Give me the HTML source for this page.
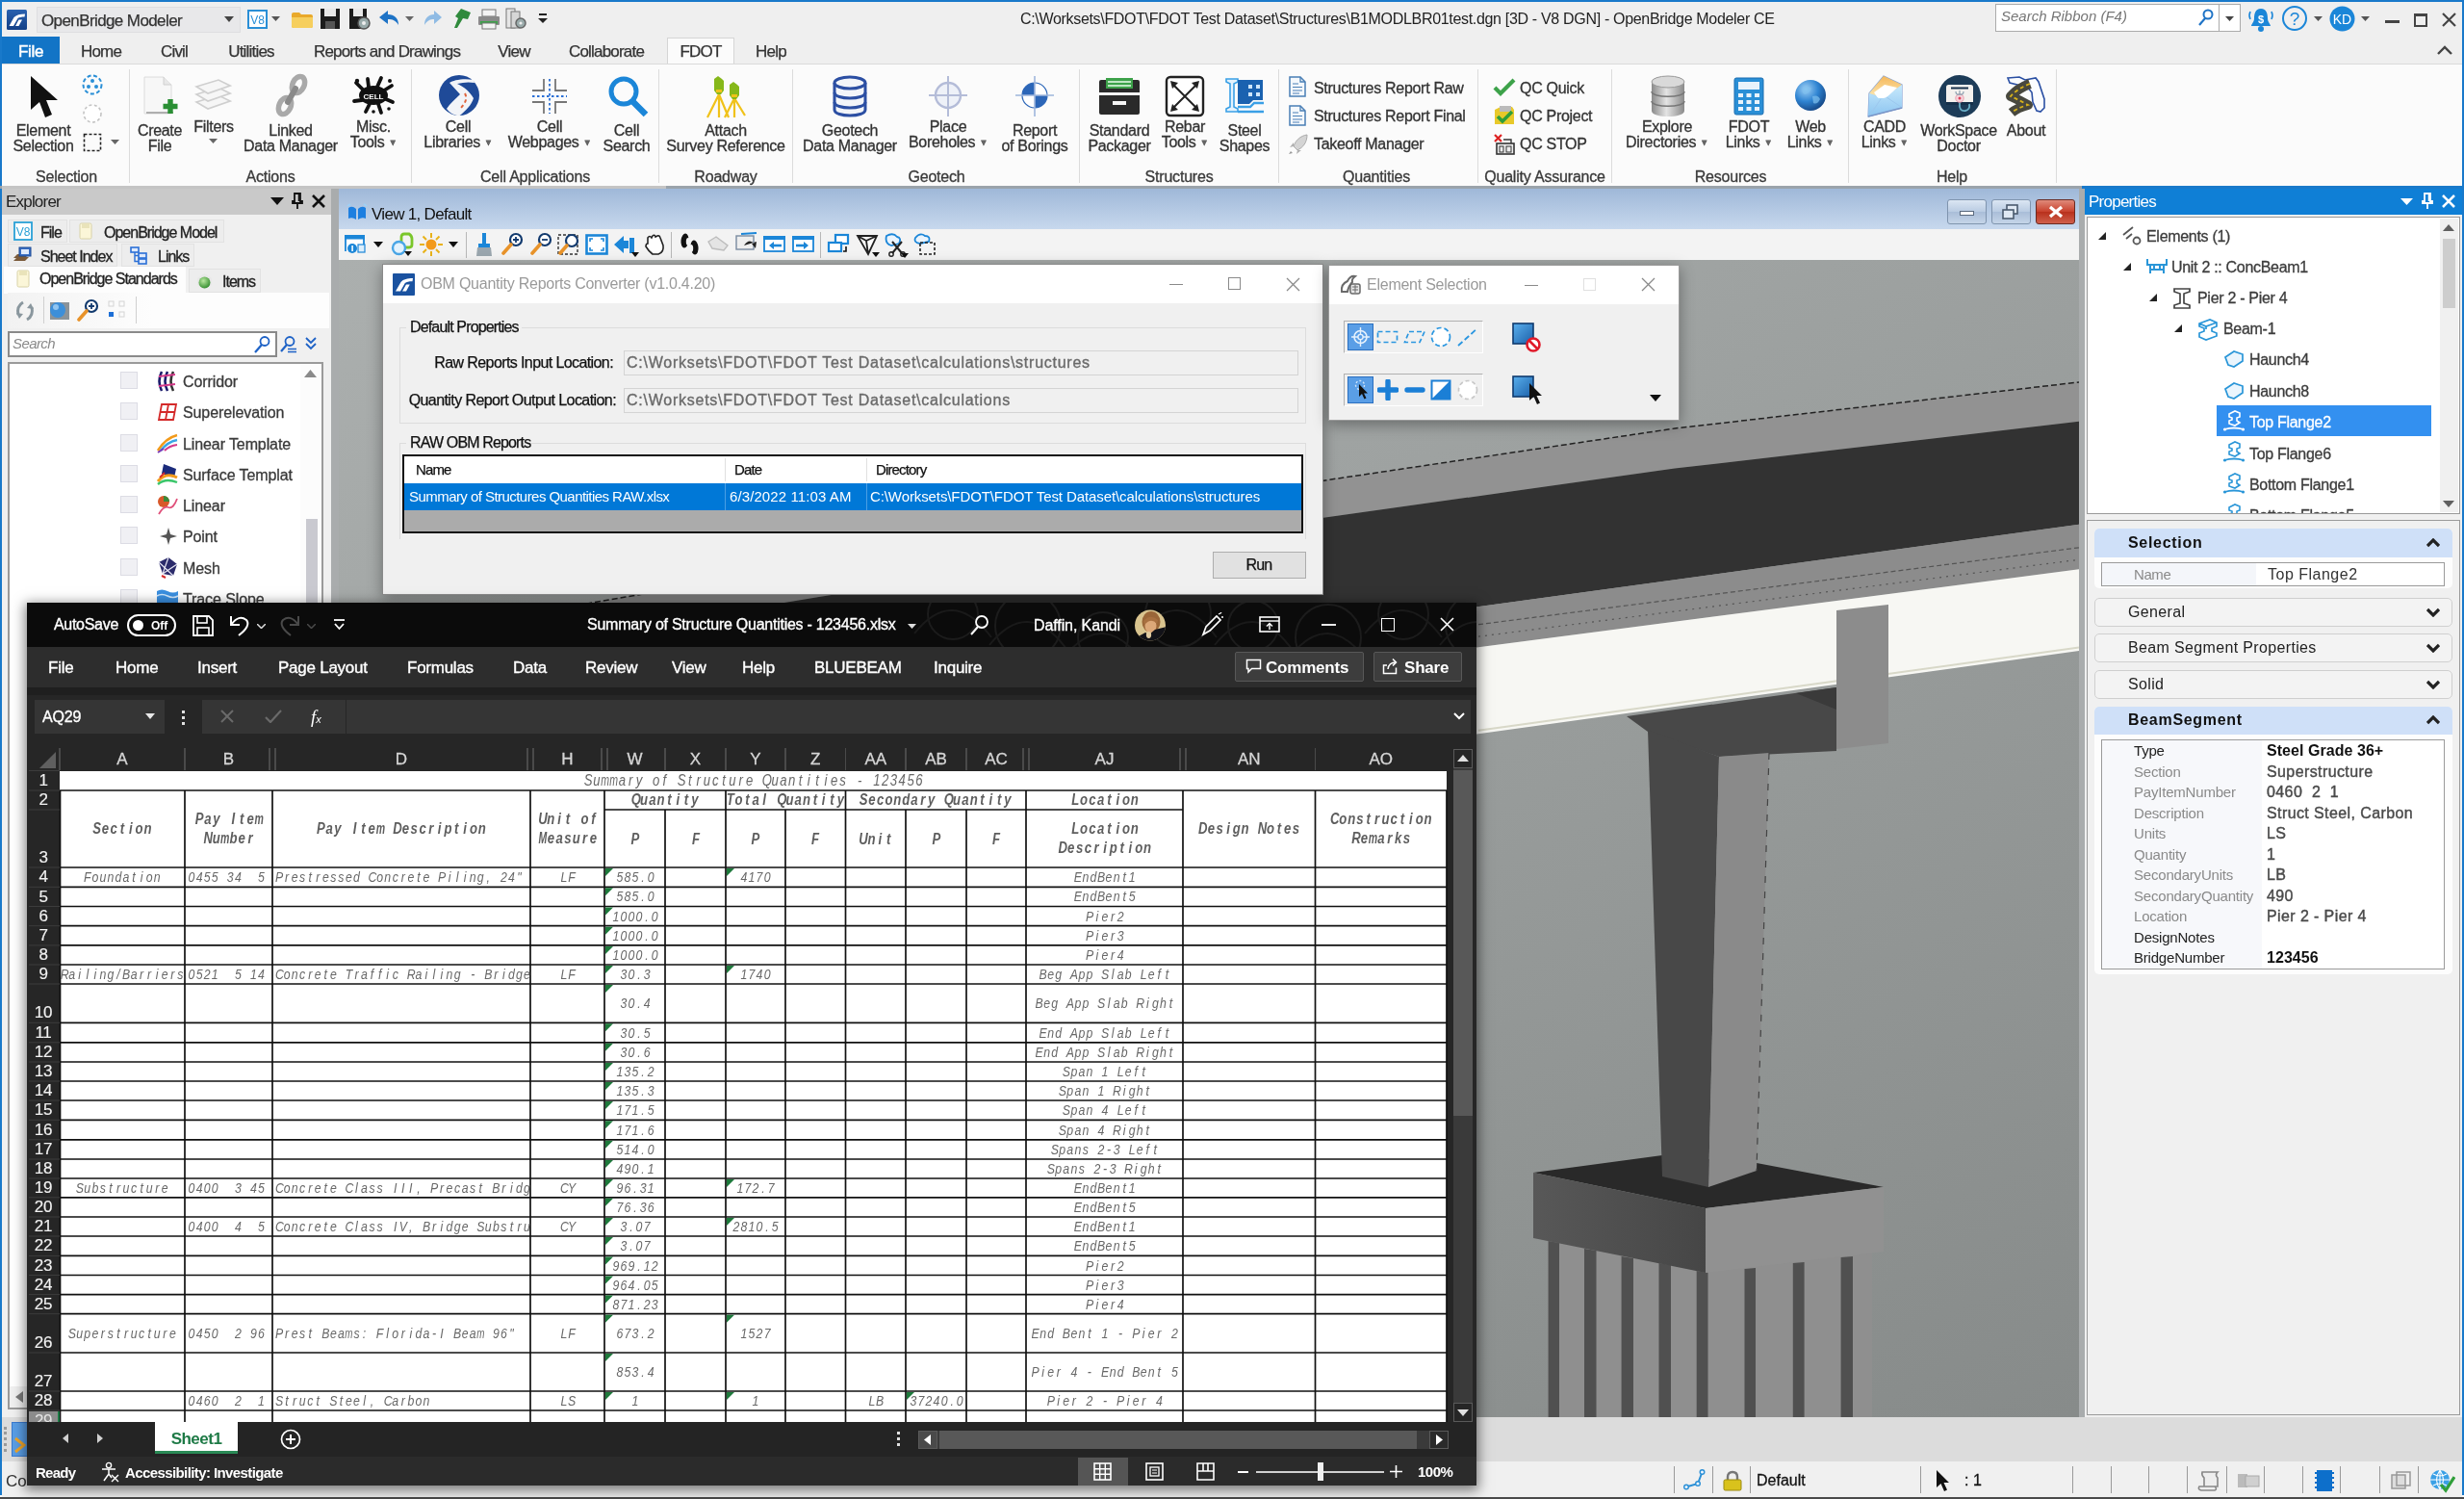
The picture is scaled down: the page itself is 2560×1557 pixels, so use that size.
<!DOCTYPE html>
<html><head><meta charset="utf-8"><title>OpenBridge Modeler CE</title>
<style>
html,body{margin:0;padding:0;}
body{width:2560px;height:1557px;overflow:hidden;position:relative;background:#f0f0f0;
font-family:"Liberation Sans",sans-serif;}
div,svg{position:absolute;box-sizing:border-box;}
.t{white-space:pre;}
.c{transform:translateX(-50%);text-align:center;}
.r{transform:translateX(-100%);text-align:right;}
.mc,.mh{font-style:italic;line-height:18px;white-space:pre;}
.mc{font-size:15px;color:#686868;}
.mh{font-size:16px;font-weight:bold;color:#5e5e5e;}
.mt{font-size:16px;color:#686868;font-style:italic;line-height:18px;white-space:pre;}
.mt i{display:inline-block;text-align:center;position:static;width:10.75px;}
.mt u{display:inline-block;text-decoration:none;transform:scaleX(.8);position:static;margin:0 -2px;}
.mc i,.mh i{display:inline-block;text-align:center;position:static;}
.mc i{width:9.82px;}
.mh i{width:10.75px;}
.mc u,.mh u{display:inline-block;text-decoration:none;transform:scaleX(.8);position:static;margin:0 -2px;}
</style></head><body>
<div id="root" style="left:0;top:0;width:2560px;height:1557px;will-change:transform;">
<div style="left:0px;top:0px;width:2560px;height:38px;background:#efefef;"></div>
<div style="left:0px;top:0px;width:2560px;height:2px;background:#1979ca;"></div>
<div style="left:0px;top:0px;width:2px;height:1557px;background:#1979ca;"></div>
<div style="left:2558px;top:0px;width:2px;height:1557px;background:#1979ca;"></div>
<div style="left:0px;top:1553px;width:2560px;height:2px;background:#fafafa;"></div>
<div style="left:0px;top:1555px;width:2560px;height:2px;background:#4a4a4a;"></div>
<svg style="left:7px;top:10px;" width="21" height="21" viewBox="0 0 21 21"><defs><linearGradient id="glg" x1="0" y1="0" x2="0" y2="1"><stop offset="0" stop-color="#2a62b0"/><stop offset="1" stop-color="#123f86"/></linearGradient></defs><rect width="21" height="21" rx="1.5" fill="url(#glg)"/><path d="M2.5 17 L7.5 8 C10 5.5 14 4.5 19 4.5 L18.5 7.5 C15 7.5 13 8 11.5 9 L7 17 Z" fill="#fff"/><path d="M9 17 L12.5 10.5 L16 10.5 L12.5 17 Z" fill="#fff"/></svg>
<div style="left:38px;top:7px;width:212px;height:27px;background:#e8e8ea;border:1px solid #dedee0;"></div>
<div class="t" style="left:43px;top:10.5px;font-size:17px;line-height:21px;color:#333;letter-spacing:-0.6px;-webkit-text-stroke:0.25px;">OpenBridge Modeler</div>
<svg style="left:233px;top:17px;" width="10" height="6" viewBox="0 0 10 6"><path d="M0 0 L10 0 L5 6 Z" fill="#444"/></svg>
<svg style="left:257px;top:10px;" width="21" height="20" viewBox="0 0 21 20"><rect x="1" y="1" width="19" height="18" fill="#fff" stroke="#2a8fd6" stroke-width="2"/><text x="10.5" y="15" font-size="12" text-anchor="middle" fill="#2a8fd6" font-family="Liberation Sans">V8</text></svg><svg style="left:282px;top:17px;" width="9" height="5" viewBox="0 0 9 5"><path d="M0 0 L9 0 L4.5 5 Z" fill="#555"/></svg><svg style="left:302px;top:10px;" width="24" height="20" viewBox="0 0 24 20"><path d="M1 5 Q1 3 3 3 L9 3 L11 5 L21 5 Q23 5 23 7 L23 17 Q23 19 21 19 L3 19 Q1 19 1 17 Z" fill="#e9a92b"/><path d="M1 8 L23 8 L23 17 Q23 19 21 19 L3 19 Q1 19 1 17 Z" fill="#f6cf5e"/></svg><svg style="left:332px;top:8px;" width="22" height="23" viewBox="0 0 22 23"><path d="M1 1 L21 1 L21 22 L1 22 Z" fill="#1c1c1c"/><rect x="5" y="1" width="12" height="8" fill="#e8e8e8"/><rect x="6" y="14" width="10" height="8" fill="#555"/></svg><svg style="left:362px;top:8px;" width="23" height="23" viewBox="0 0 23 23"><path d="M1 1 L19 1 L19 22 L1 22 Z" fill="#1c1c1c"/><rect x="5" y="1" width="10" height="8" fill="#e8e8e8"/><circle cx="16" cy="16" r="6" fill="#9aa" stroke="#555" stroke-width="1.5"/><circle cx="16" cy="16" r="2" fill="#eee"/></svg><svg style="left:393px;top:10px;" width="22" height="18" viewBox="0 0 22 18"><path d="M1 8 L10 1 L10 5 C17 5 21 9 21 16 C18 11 15 10 10 10 L10 15 Z" fill="#1e73c6"/></svg><svg style="left:421px;top:17px;" width="9" height="5" viewBox="0 0 9 5"><path d="M0 0 L9 0 L4.5 5 Z" fill="#666"/></svg><svg style="left:440px;top:10px;" width="20" height="18" viewBox="0 0 20 18"><path d="M19 8 L11 1 L11 5 C5 5 1 9 1 16 C4 11 7 10 11 10 L11 15 Z" fill="#8fbbe4"/></svg><svg style="left:469px;top:8px;" width="22" height="23" viewBox="0 0 22 23"><path d="M10 1 L20 5 L17 12 L12 11 L6 21 L3 21 L7 11 L4 9 Z" fill="#2f8a3c"/></svg><svg style="left:496px;top:9px;" width="24" height="22" viewBox="0 0 24 22"><rect x="5" y="1" width="14" height="7" fill="#f4f4f4" stroke="#777"/><rect x="1" y="8" width="22" height="9" rx="1" fill="#8a8a8a"/><rect x="3" y="13" width="18" height="3" fill="#3da24a"/><rect x="5" y="15" width="14" height="6" fill="#f4f4f4" stroke="#777"/></svg><svg style="left:525px;top:8px;" width="23" height="23" viewBox="0 0 23 23"><rect x="1" y="1" width="9" height="20" fill="#e6e6e6" stroke="#777"/><rect x="6" y="4" width="9" height="17" fill="#d6d6d6" stroke="#777"/><circle cx="16" cy="16" r="5" fill="#9aa" stroke="#666" stroke-width="1.5"/><circle cx="16" cy="16" r="1.6" fill="#eee"/></svg><svg style="left:559px;top:14px;" width="10" height="11" viewBox="0 0 10 11"><rect x="1" y="0" width="8" height="2" fill="#222"/><path d="M0 5 L10 5 L5 10 Z" fill="#222"/></svg>
<div class="t c" style="left:1451.8px;top:10.0px;font-size:16px;line-height:20px;color:#222;letter-spacing:-0.32px;">C:\Worksets\FDOT\FDOT Test Dataset\Structures\B1MODLBR01test.dgn [3D - V8 DGN] - OpenBridge Modeler CE</div>
<div style="left:2073px;top:4px;width:255px;height:29px;background:#fff;border:1px solid #ababab;"></div>
<div class="t" style="left:2079px;top:8.0px;font-size:15px;line-height:18px;color:#777;font-style:italic;">Search Ribbon (F4)</div>
<svg style="left:2284px;top:9px;" width="16" height="18" viewBox="0 0 16 18"><circle cx="10" cy="6" r="4.5" fill="none" stroke="#1e73c6" stroke-width="2"/><path d="M7 10 L1 17" stroke="#1e73c6" stroke-width="2.2"/></svg>
<div style="left:2305px;top:5px;width:1px;height:27px;background:#ababab;"></div>
<svg style="left:2312px;top:17px;" width="9" height="5" viewBox="0 0 9 5"><path d="M0 0 L9 0 L4.5 5 Z" fill="#444"/></svg>
<svg style="left:2335px;top:6px;" width="28" height="28" viewBox="0 0 28 28"><path d="M14 3 C8 3 7 9 7 13 C7 17 4 19 4 21 L24 21 C24 19 21 17 21 13 C21 9 20 3 14 3 Z" fill="#1b86d8"/><circle cx="14" cy="24" r="3" fill="#1b86d8"/><path d="M3 6 Q1 10 3 14 M25 6 Q27 10 25 14" stroke="#1b86d8" stroke-width="1.6" fill="none"/><text x="14" y="18" font-size="11" font-weight="bold" text-anchor="middle" fill="#fff" font-family="Liberation Sans">$</text></svg>
<svg style="left:2370px;top:5px;" width="28" height="28" viewBox="0 0 28 28"><circle cx="14" cy="14" r="12" fill="none" stroke="#1b86d8" stroke-width="2"/><text x="14" y="21" font-size="19" text-anchor="middle" fill="#1b86d8" font-family="Liberation Sans">?</text></svg>
<svg style="left:2404px;top:17px;" width="9" height="5" viewBox="0 0 9 5"><path d="M0 0 L9 0 L4.5 5 Z" fill="#555"/></svg>
<svg style="left:2420px;top:6px;" width="27" height="27" viewBox="0 0 27 27"><circle cx="13.5" cy="13.5" r="13" fill="#1b86d8"/><text x="13.5" y="19" font-size="14" text-anchor="middle" fill="#fff" font-family="Liberation Sans">KD</text></svg>
<svg style="left:2453px;top:17px;" width="9" height="5" viewBox="0 0 9 5"><path d="M0 0 L9 0 L4.5 5 Z" fill="#555"/></svg>
<div style="left:2478px;top:21px;width:15px;height:3px;background:#444;"></div>
<div style="left:2508px;top:14px;width:14px;height:14px;border:2px solid #444;border-top-width:3px;"></div>
<svg style="left:2537px;top:13px;" width="15" height="15" viewBox="0 0 15 15"><path d="M1 1 L14 14 M14 1 L1 14" stroke="#444" stroke-width="2.2"/></svg>
<div style="left:2px;top:38px;width:2556px;height:28px;background:#efefef;"></div>
<div style="left:2px;top:38px;width:60px;height:28px;background:#1274c6;"></div>
<div class="t c" style="left:32px;top:42.5px;font-size:17px;line-height:21px;color:#fff;-webkit-text-stroke:0.45px #fff;letter-spacing:-0.3px;">File</div>
<div style="left:693px;top:39px;width:70px;height:28px;background:#fbfbfb;border:1px solid #d5d5d5;border-bottom:none;"></div>
<div class="t c" style="left:105px;top:42.5px;font-size:17px;line-height:21px;color:#333;letter-spacing:-0.8px;-webkit-text-stroke:0.25px;">Home</div>
<div class="t c" style="left:181px;top:42.5px;font-size:17px;line-height:21px;color:#333;letter-spacing:-0.8px;-webkit-text-stroke:0.25px;">Civil</div>
<div class="t c" style="left:261px;top:42.5px;font-size:17px;line-height:21px;color:#333;letter-spacing:-0.8px;-webkit-text-stroke:0.25px;">Utilities</div>
<div class="t c" style="left:402px;top:42.5px;font-size:17px;line-height:21px;color:#333;letter-spacing:-0.8px;-webkit-text-stroke:0.25px;">Reports and Drawings</div>
<div class="t c" style="left:534px;top:42.5px;font-size:17px;line-height:21px;color:#333;letter-spacing:-0.8px;-webkit-text-stroke:0.25px;">View</div>
<div class="t c" style="left:630px;top:42.5px;font-size:17px;line-height:21px;color:#333;letter-spacing:-0.8px;-webkit-text-stroke:0.25px;">Collaborate</div>
<div class="t c" style="left:728px;top:42.5px;font-size:17px;line-height:21px;color:#333;letter-spacing:-0.8px;-webkit-text-stroke:0.25px;">FDOT</div>
<div class="t c" style="left:801px;top:42.5px;font-size:17px;line-height:21px;color:#333;letter-spacing:-0.8px;-webkit-text-stroke:0.25px;">Help</div>
<svg style="left:2532px;top:47px;" width="16" height="10" viewBox="0 0 16 10"><path d="M1 9 L8 2 L15 9" fill="none" stroke="#444" stroke-width="2.4"/></svg>
<div style="left:2px;top:1472px;width:2556px;height:46px;background:#dcdcdc;"></div>
<div style="left:2px;top:1518px;width:2556px;height:37px;background:#f0f0f0;"></div>
<div style="left:1739px;top:1523px;width:1px;height:28px;background:#9a9a9a;"></div>
<div style="left:1779px;top:1523px;width:1px;height:28px;background:#9a9a9a;"></div>
<div style="left:1818px;top:1523px;width:1px;height:28px;background:#9a9a9a;"></div>
<div style="left:1995px;top:1523px;width:1px;height:28px;background:#9a9a9a;"></div>
<div style="left:2153px;top:1523px;width:1px;height:28px;background:#9a9a9a;"></div>
<div style="left:2193px;top:1523px;width:1px;height:28px;background:#9a9a9a;"></div>
<div style="left:2232px;top:1523px;width:1px;height:28px;background:#9a9a9a;"></div>
<div style="left:2272px;top:1523px;width:1px;height:28px;background:#9a9a9a;"></div>
<div style="left:2313px;top:1523px;width:1px;height:28px;background:#9a9a9a;"></div>
<div style="left:2352px;top:1523px;width:1px;height:28px;background:#9a9a9a;"></div>
<div style="left:2392px;top:1523px;width:1px;height:28px;background:#9a9a9a;"></div>
<div style="left:2431px;top:1523px;width:1px;height:28px;background:#9a9a9a;"></div>
<div style="left:2472px;top:1523px;width:1px;height:28px;background:#9a9a9a;"></div>
<div style="left:2512px;top:1523px;width:1px;height:28px;background:#9a9a9a;"></div>
<svg style="left:1748px;top:1525px;" width="26" height="24" viewBox="0 0 26 24"><path d="M4 19.5 L16 16 L20.5 4" fill="none" stroke="#2a8fd6" stroke-width="2"/><g fill="#eaf4fd" stroke="#2a8fd6" stroke-width="1.4"><circle cx="4" cy="19.5" r="2.3"/><circle cx="16" cy="16" r="2.3"/><circle cx="20.5" cy="4" r="2.3"/></g></svg>
<svg style="left:1789px;top:1527px;" width="22" height="22" viewBox="0 0 22 22"><path d="M6 10 L6 7 Q6 2 11 2 Q16 2 16 7 L16 10" fill="none" stroke="#777" stroke-width="2.4"/><rect x="2" y="10" width="18" height="11" rx="1.5" fill="#d9c21c" stroke="#9b8a10"/></svg>
<div class="t" style="left:1825px;top:1528.0px;font-size:16px;line-height:20px;color:#111;-webkit-text-stroke:0.3px;">Default</div>
<svg style="left:2011px;top:1526px;" width="16" height="24" viewBox="0 0 16 24"><path d="M1 1 L1 19 L5.5 15 L9 23 L12 21.5 L8.5 14 L14 14 Z" fill="#111"/></svg>
<div class="t" style="left:2041px;top:1528.0px;font-size:16px;line-height:20px;color:#111;-webkit-text-stroke:0.3px;">: 1</div>
<svg style="left:2282px;top:1526px;" width="26" height="24" viewBox="0 0 26 24"><path d="M6 3 L22 3 Q19 6 22 9 L22 18 L8 18 L8 9 Q5 6 6 3 Z M3 18 L19 18 Q22 21 19 22 L5 22 Q1 21 3 18 Z" fill="#eee" stroke="#888" stroke-width="1.6"/></svg>
<svg style="left:2324px;top:1529px;" width="24" height="18" viewBox="0 0 24 18"><rect x="1" y="2" width="10" height="14" fill="#bbb"/><rect x="9" y="4" width="14" height="11" fill="#d0d0d0" stroke="#aaa"/></svg>
<svg style="left:2404px;top:1526px;" width="22" height="24" viewBox="0 0 22 24"><rect x="3" y="1" width="16" height="22" fill="#0d6fcb"/><path d="M1 4 h3 M1 9 h3 M1 14 h3 M1 19 h3 M18 4 h3 M18 9 h3 M18 14 h3 M18 19 h3" stroke="#0d6fcb" stroke-width="2"/></svg>
<svg style="left:2484px;top:1528px;" width="22" height="20" viewBox="0 0 22 20"><rect x="1" y="4" width="14" height="14" fill="#ddd" stroke="#999" stroke-width="1.5"/><rect x="6" y="1" width="14" height="14" fill="none" stroke="#999" stroke-width="1.5"/></svg>
<svg style="left:2523px;top:1525px;" width="28" height="26" viewBox="0 0 28 26"><circle cx="12" cy="12" r="10" fill="#3aa0e6"/><path d="M2 12 h20 M12 2 v20 M5 6 Q12 10 19 6 M5 18 Q12 14 19 18 M12 2 Q5 12 12 22 M12 2 Q19 12 12 22" stroke="#fff" stroke-width="1.1" fill="none"/><path d="M13 17 L18 23 L27 9" fill="none" stroke="#2f9e3a" stroke-width="3.2"/></svg>
<div class="t" style="left:6px;top:1527.5px;font-size:17px;line-height:21px;color:#333;">Co</div>
<div style="left:2px;top:66px;width:2556px;height:129px;background:#fbfbfb;border-top:1px solid #dadada;"></div>
<div style="left:0px;top:193px;width:2560px;height:3px;background:#9aa3ab;"></div>
<div style="left:2px;top:193px;width:690px;height:3px;background:#c4c4c4;"></div>
<div style="left:2163px;top:193px;width:397px;height:3px;background:#1979ca;"></div>
<div style="left:134px;top:72px;width:1px;height:118px;background:#dcdcdc;"></div>
<div style="left:427px;top:72px;width:1px;height:118px;background:#dcdcdc;"></div>
<div style="left:684px;top:72px;width:1px;height:118px;background:#dcdcdc;"></div>
<div style="left:823px;top:72px;width:1px;height:118px;background:#dcdcdc;"></div>
<div style="left:1121px;top:72px;width:1px;height:118px;background:#dcdcdc;"></div>
<div style="left:1328px;top:72px;width:1px;height:118px;background:#dcdcdc;"></div>
<div style="left:1535px;top:72px;width:1px;height:118px;background:#dcdcdc;"></div>
<div style="left:1674px;top:72px;width:1px;height:118px;background:#dcdcdc;"></div>
<div style="left:1920px;top:72px;width:1px;height:118px;background:#dcdcdc;"></div>
<div style="left:2136px;top:72px;width:1px;height:118px;background:#dcdcdc;"></div>
<div class="t c" style="left:69px;top:173.5px;font-size:16px;line-height:20px;color:#3a3a3a;letter-spacing:-0.2px;-webkit-text-stroke:0.3px #3a3a3a;">Selection</div>
<div class="t c" style="left:281px;top:173.5px;font-size:16px;line-height:20px;color:#3a3a3a;letter-spacing:-0.2px;-webkit-text-stroke:0.3px #3a3a3a;">Actions</div>
<div class="t c" style="left:556px;top:173.5px;font-size:16px;line-height:20px;color:#3a3a3a;letter-spacing:-0.2px;-webkit-text-stroke:0.3px #3a3a3a;">Cell Applications</div>
<div class="t c" style="left:754px;top:173.5px;font-size:16px;line-height:20px;color:#3a3a3a;letter-spacing:-0.2px;-webkit-text-stroke:0.3px #3a3a3a;">Roadway</div>
<div class="t c" style="left:973px;top:173.5px;font-size:16px;line-height:20px;color:#3a3a3a;letter-spacing:-0.2px;-webkit-text-stroke:0.3px #3a3a3a;">Geotech</div>
<div class="t c" style="left:1225px;top:173.5px;font-size:16px;line-height:20px;color:#3a3a3a;letter-spacing:-0.2px;-webkit-text-stroke:0.3px #3a3a3a;">Structures</div>
<div class="t c" style="left:1430px;top:173.5px;font-size:16px;line-height:20px;color:#3a3a3a;letter-spacing:-0.2px;-webkit-text-stroke:0.3px #3a3a3a;">Quantities</div>
<div class="t c" style="left:1605px;top:173.5px;font-size:16px;line-height:20px;color:#3a3a3a;letter-spacing:-0.2px;-webkit-text-stroke:0.3px #3a3a3a;">Quality Assurance</div>
<div class="t c" style="left:1798px;top:173.5px;font-size:16px;line-height:20px;color:#3a3a3a;letter-spacing:-0.2px;-webkit-text-stroke:0.3px #3a3a3a;">Resources</div>
<div class="t c" style="left:2028px;top:173.5px;font-size:16px;line-height:20px;color:#3a3a3a;letter-spacing:-0.2px;-webkit-text-stroke:0.3px #3a3a3a;">Help</div>
<svg style="left:30px;top:78px;" width="32" height="46" viewBox="0 0 32 46"><path d="M2 1 L2 36 L11 28 L17 44 L24 41 L18 26 L30 26 Z" fill="#111"/></svg>
<div class="t c" style="left:45px;top:125.5px;font-size:16px;line-height:20px;color:#333;letter-spacing:-0.3px;-webkit-text-stroke:0.3px #333;">Element</div><div class="t c" style="left:45px;top:141.5px;font-size:16px;line-height:20px;color:#333;letter-spacing:-0.3px;-webkit-text-stroke:0.3px #333;">Selection</div>
<svg style="left:84px;top:76px;" width="24" height="24" viewBox="0 0 24 24"><circle cx="12" cy="12" r="9.5" fill="none" stroke="#2a8fd6" stroke-width="2" stroke-dasharray="4 2.5"/><circle cx="12" cy="8" r="2" fill="#2a8fd6"/><circle cx="8" cy="14" r="2" fill="#2a8fd6"/><circle cx="16" cy="14" r="2" fill="#2a8fd6"/></svg>
<svg style="left:85px;top:107px;" width="22" height="22" viewBox="0 0 22 22"><circle cx="11" cy="11" r="9" fill="#fff" stroke="#c4c4c4" stroke-width="1.6" stroke-dasharray="3 2.5"/></svg>
<svg style="left:86px;top:138px;" width="20" height="20" viewBox="0 0 20 20"><rect x="1.5" y="1.5" width="17" height="17" fill="none" stroke="#222" stroke-width="1.6" stroke-dasharray="3 2"/></svg>
<svg style="left:115px;top:145px;" width="9" height="5" viewBox="0 0 9 5"><path d="M0 0 L9 0 L4.5 5 Z" fill="#666"/></svg>
<svg style="left:146px;top:78px;" width="42" height="44" viewBox="0 0 42 44"><path d="M4 2 L24 2 L32 10 L32 40 L4 40 Z" fill="#f7f7f7" stroke="#dcdcdc"/><path d="M24 2 L24 10 L32 10" fill="#e8e8e8" stroke="#d0d0d0"/><path d="M6 39 L34 39" stroke="#999" stroke-width="1.5"/><path d="M31 25 v15 M23.5 32.5 h15" stroke="#2a8f34" stroke-width="5.4"/></svg>
<div class="t c" style="left:166px;top:125.5px;font-size:16px;line-height:20px;color:#333;letter-spacing:-0.3px;-webkit-text-stroke:0.3px #333;">Create</div><div class="t c" style="left:166px;top:141.5px;font-size:16px;line-height:20px;color:#333;letter-spacing:-0.3px;-webkit-text-stroke:0.3px #333;">File</div>
<svg style="left:201px;top:80px;" width="40" height="38" viewBox="0 0 40 38"><g fill="#f6f6f6" stroke="#cfcfcf" stroke-width="1.6"><path d="M3 26 L26 19 L38 25 L15 33 Z"/><path d="M3 18 L26 11 L38 17 L15 25 Z"/><path d="M3 10 L26 3 L38 9 L15 17 Z"/></g></svg>
<div class="t c" style="left:222px;top:121.5px;font-size:16px;line-height:20px;color:#333;letter-spacing:-0.3px;-webkit-text-stroke:0.3px #333;">Filters</div>
<svg style="left:217px;top:144px;" width="9" height="5" viewBox="0 0 9 5"><path d="M0 0 L9 0 L4.5 5 Z" fill="#666"/></svg>
<svg style="left:284px;top:76px;" width="38" height="46" viewBox="0 0 38 46"><g fill="none" stroke="#a9a9a9" stroke-width="5.5"><ellipse cx="26" cy="12" rx="6" ry="9" transform="rotate(25 26 12)"/><ellipse cx="12" cy="34" rx="6" ry="9" transform="rotate(25 12 34)"/></g><path d="M23 16 L15 30" stroke="#8a8a8a" stroke-width="6" stroke-linecap="round"/></svg>
<div class="t c" style="left:302px;top:125.5px;font-size:16px;line-height:20px;color:#333;letter-spacing:-0.3px;-webkit-text-stroke:0.3px #333;">Linked</div><div class="t c" style="left:302px;top:141.5px;font-size:16px;line-height:20px;color:#333;letter-spacing:-0.3px;-webkit-text-stroke:0.3px #333;">Data Manager</div>
<svg style="left:365px;top:78px;" width="46" height="42" viewBox="0 0 46 42"><ellipse cx="23" cy="21" rx="15" ry="10" fill="#111"/><g stroke="#111" stroke-width="3.8" stroke-linecap="round"><path d="M12 15 L5 8 M18 12 L17 4 M27 12 L31 3 M34 16 L42 11 M36 25 L43 28 M28 30 L31 39 M19 30 L15 38 M11 26 L3 27"/></g><circle cx="6" cy="6" r="2.2" fill="#111"/><circle cx="40" cy="6" r="2" fill="#111"/><circle cx="39" cy="35" r="1.8" fill="#111"/><circle cx="23" cy="38" r="1.8" fill="#111"/><text x="23" y="24.5" font-size="8" font-weight="bold" text-anchor="middle" fill="#fff" font-family="Liberation Sans">CELL</text></svg>
<div class="t c" style="left:388px;top:121.5px;font-size:16px;line-height:20px;color:#333;letter-spacing:-0.3px;-webkit-text-stroke:0.3px #333;">Misc.</div>
<div class="t c" style="left:388px;top:121.5px;font-size:16px;line-height:20px;color:#333;letter-spacing:-0.3px;-webkit-text-stroke:0.3px #333;"></div><div class="t c" style="left:388px;top:137.5px;font-size:16px;line-height:20px;color:#333;letter-spacing:-0.3px;-webkit-text-stroke:0.3px #333;">Tools <span style="font-size:9px;color:#666;position:relative;top:-2px;">&#9660;</span></div>
<svg style="left:455px;top:77px;" width="44" height="44" viewBox="0 0 44 44"><circle cx="22" cy="22" r="21" fill="#1f4a98"/><path d="M37 6 C27 4 16 6 12 9 L23 21 C18 26 12 31 9 36 C12 40 16 42.5 22 43.5 C29 38 35 32 37 25 C33 18 27 13 20 10 C26 8.5 32 8 38 9 Z" fill="#f2f4f8"/><path d="M28 20 C31 26 28 31 22 37" stroke="#e0643c" stroke-width="2" stroke-dasharray="3.5 3" fill="none"/></svg>
<div class="t c" style="left:476px;top:121.5px;font-size:16px;line-height:20px;color:#333;letter-spacing:-0.3px;-webkit-text-stroke:0.3px #333;">Cell</div>
<div class="t c" style="left:476px;top:121.5px;font-size:16px;line-height:20px;color:#333;letter-spacing:-0.3px;-webkit-text-stroke:0.3px #333;"></div><div class="t c" style="left:476px;top:137.5px;font-size:16px;line-height:20px;color:#333;letter-spacing:-0.3px;-webkit-text-stroke:0.3px #333;">Libraries <span style="font-size:9px;color:#666;position:relative;top:-2px;">&#9660;</span></div>
<svg style="left:551px;top:80px;" width="40" height="40" viewBox="0 0 40 40"><g stroke="#777" stroke-width="1.8" fill="none"><path d="M2 14 L14 14 L14 2 M26 2 L26 14 L38 14 M2 26 L14 26 L14 38 M26 38 L26 26 L38 26"/></g><g stroke="#2a6fd6" stroke-width="1.8" stroke-dasharray="2.5 2.5"><path d="M20 2 L20 38 M2 20 L38 20"/></g></svg>
<div class="t c" style="left:571px;top:121.5px;font-size:16px;line-height:20px;color:#333;letter-spacing:-0.3px;-webkit-text-stroke:0.3px #333;">Cell</div>
<div class="t c" style="left:571px;top:121.5px;font-size:16px;line-height:20px;color:#333;letter-spacing:-0.3px;-webkit-text-stroke:0.3px #333;"></div><div class="t c" style="left:571px;top:137.5px;font-size:16px;line-height:20px;color:#333;letter-spacing:-0.3px;-webkit-text-stroke:0.3px #333;">Webpages <span style="font-size:9px;color:#666;position:relative;top:-2px;">&#9660;</span></div>
<svg style="left:630px;top:78px;" width="44" height="44" viewBox="0 0 44 44"><circle cx="18" cy="17" r="13" fill="none" stroke="#1b86d8" stroke-width="5"/><path d="M27 27 L41 41" stroke="#1b86d8" stroke-width="6.5"/></svg>
<div class="t c" style="left:651px;top:125.5px;font-size:16px;line-height:20px;color:#333;letter-spacing:-0.3px;-webkit-text-stroke:0.3px #333;">Cell</div><div class="t c" style="left:651px;top:141.5px;font-size:16px;line-height:20px;color:#333;letter-spacing:-0.3px;-webkit-text-stroke:0.3px #333;">Search</div>
<svg style="left:732px;top:76px;" width="46" height="48" viewBox="0 0 46 48"><g stroke="#f0c21a" stroke-width="2.2"><path d="M15 22 L3 46 M15 22 L15 46 M15 22 L25 46 M31 26 L21 46 M31 26 L31 46 M31 26 L42 44"/></g><path d="M10 6 L14 3 L18 6 L20 8 L20 18 L17 22 L13 22 L10 18 Z" fill="#86b81a"/><path d="M26 12 L30 9 L34 12 L36 14 L36 23 L33 27 L29 27 L26 23 Z" fill="#86b81a"/><rect x="12" y="17" width="6" height="3" fill="#f0c21a"/><rect x="28" y="22" width="6" height="3" fill="#f0c21a"/></svg>
<div class="t c" style="left:754px;top:125.5px;font-size:16px;line-height:20px;color:#333;letter-spacing:-0.3px;-webkit-text-stroke:0.3px #333;">Attach</div><div class="t c" style="left:754px;top:141.5px;font-size:16px;line-height:20px;color:#333;letter-spacing:-0.3px;-webkit-text-stroke:0.3px #333;">Survey Reference</div>
<svg style="left:864px;top:78px;" width="38" height="44" viewBox="0 0 38 44"><g fill="#f3f5f9" stroke="#2c4fa3" stroke-width="3"><path d="M3 8 L3 36 C3 44 35 44 35 36 L35 8"/><ellipse cx="19" cy="8" rx="16" ry="6"/><path d="M3 18 C3 26 35 26 35 18 M3 28 C3 36 35 36 35 28" fill="none"/></g></svg>
<div class="t c" style="left:883px;top:125.5px;font-size:16px;line-height:20px;color:#333;letter-spacing:-0.3px;-webkit-text-stroke:0.3px #333;">Geotech</div><div class="t c" style="left:883px;top:141.5px;font-size:16px;line-height:20px;color:#333;letter-spacing:-0.3px;-webkit-text-stroke:0.3px #333;">Data Manager</div>
<svg style="left:964px;top:78px;" width="42" height="44" viewBox="0 0 42 44"><circle cx="21" cy="21" r="13" fill="#eef1f8" stroke="#b4bcd8" stroke-width="2.4"/><path d="M21 1 L21 43 M1 21 L41 21" stroke="#b4bcd8" stroke-width="2"/></svg>
<div class="t c" style="left:985px;top:121.5px;font-size:16px;line-height:20px;color:#333;letter-spacing:-0.3px;-webkit-text-stroke:0.3px #333;">Place</div>
<div class="t c" style="left:985px;top:121.5px;font-size:16px;line-height:20px;color:#333;letter-spacing:-0.3px;-webkit-text-stroke:0.3px #333;"></div><div class="t c" style="left:985px;top:137.5px;font-size:16px;line-height:20px;color:#333;letter-spacing:-0.3px;-webkit-text-stroke:0.3px #333;">Boreholes <span style="font-size:9px;color:#666;position:relative;top:-2px;">&#9660;</span></div>
<svg style="left:1054px;top:78px;" width="42" height="44" viewBox="0 0 42 44"><circle cx="21" cy="21" r="13" fill="#fff" stroke="#2c66b8" stroke-width="1.2"/><path d="M21 8 A13 13 0 0 0 8 21 L21 21 Z M21 34 A13 13 0 0 0 34 21 L21 21 Z" fill="#2c66b8"/><path d="M21 1 L21 43 M1 21 L41 21" stroke="#9fb6dc" stroke-width="1.6"/></svg>
<div class="t c" style="left:1075px;top:125.5px;font-size:16px;line-height:20px;color:#333;letter-spacing:-0.3px;-webkit-text-stroke:0.3px #333;">Report</div><div class="t c" style="left:1075px;top:141.5px;font-size:16px;line-height:20px;color:#333;letter-spacing:-0.3px;-webkit-text-stroke:0.3px #333;">of Borings</div>
<svg style="left:1141px;top:80px;" width="44" height="40" viewBox="0 0 44 40"><rect x="1" y="3" width="42" height="36" rx="2" fill="#2a2a2a"/><rect x="8" y="1" width="28" height="11" fill="#3da24a"/><rect x="10" y="4" width="24" height="2" fill="#bfe6c4"/><rect x="10" y="8" width="24" height="2" fill="#bfe6c4"/><rect x="1" y="16" width="42" height="3" fill="#f5f5f5"/><rect x="15" y="25" width="14" height="4" fill="#f5f5f5"/></svg>
<div class="t c" style="left:1163px;top:125.5px;font-size:16px;line-height:20px;color:#333;letter-spacing:-0.3px;-webkit-text-stroke:0.3px #333;">Standard</div><div class="t c" style="left:1163px;top:141.5px;font-size:16px;line-height:20px;color:#333;letter-spacing:-0.3px;-webkit-text-stroke:0.3px #333;">Packager</div>
<svg style="left:1210px;top:78px;" width="42" height="44" viewBox="0 0 42 44"><rect x="2" y="2" width="38" height="40" rx="4" fill="#fff" stroke="#222" stroke-width="2.4"/><path d="M8 9 L34 35 M34 9 L8 35" stroke="#222" stroke-width="2"/><path d="M6 6 L14 8 L8 14 Z M36 6 L28 8 L34 14 Z M6 38 L14 36 L8 30 Z M36 38 L28 36 L34 30 Z" fill="#222"/></svg>
<div class="t c" style="left:1231px;top:121.5px;font-size:16px;line-height:20px;color:#333;letter-spacing:-0.3px;-webkit-text-stroke:0.3px #333;">Rebar</div>
<div class="t c" style="left:1231px;top:121.5px;font-size:16px;line-height:20px;color:#333;letter-spacing:-0.3px;-webkit-text-stroke:0.3px #333;"></div><div class="t c" style="left:1231px;top:137.5px;font-size:16px;line-height:20px;color:#333;letter-spacing:-0.3px;-webkit-text-stroke:0.3px #333;">Tools <span style="font-size:9px;color:#666;position:relative;top:-2px;">&#9660;</span></div>
<svg style="left:1272px;top:78px;" width="42" height="44" viewBox="0 0 42 44"><path d="M2 4 L14 4 L14 7 L10 9 L10 33 L14 35 L14 38 L2 38 L2 35 L6 33 L6 9 L2 7 Z" fill="#e3f2fd" stroke="#3aa0e6" stroke-width="1.6"/><path d="M14 5 L40 5 L40 26 L30 26 L26 30 L14 30 Z" fill="#1a62b0"/><g fill="#cfe6fb"><rect x="25" y="10" width="4" height="4"/><rect x="33" y="10" width="4" height="4"/><rect x="25" y="18" width="4" height="4"/><rect x="33" y="18" width="4" height="4"/></g><path d="M14 33 L27 33 L31 29 L41 29 M14 38 L41 38" stroke="#3aa0e6" stroke-width="2.4" fill="none"/></svg>
<div class="t c" style="left:1293px;top:125.5px;font-size:16px;line-height:20px;color:#333;letter-spacing:-0.3px;-webkit-text-stroke:0.3px #333;">Steel</div><div class="t c" style="left:1293px;top:141.5px;font-size:16px;line-height:20px;color:#333;letter-spacing:-0.3px;-webkit-text-stroke:0.3px #333;">Shapes</div>
<svg style="left:1338px;top:79px;" width="20" height="22" viewBox="0 0 20 22"><path d="M2 1 L13 1 L18 6 L18 21 L2 21 Z" fill="#f4f8fc" stroke="#4a7fb5" stroke-width="1.5"/><path d="M13 1 L13 6 L18 6" fill="none" stroke="#4a7fb5" stroke-width="1.3"/><path d="M5 8 h6 M5 11.5 h10 M5 15 h10 M5 18 h7" stroke="#4a7fb5" stroke-width="1.2"/></svg>
<div class="t" style="left:1365px;top:81.5px;font-size:16px;line-height:20px;color:#333;letter-spacing:-0.3px;-webkit-text-stroke:0.3px #333;">Structures Report Raw</div>
<svg style="left:1338px;top:109px;" width="20" height="22" viewBox="0 0 20 22"><path d="M2 1 L13 1 L18 6 L18 21 L2 21 Z" fill="#f4f8fc" stroke="#4a7fb5" stroke-width="1.5"/><path d="M13 1 L13 6 L18 6" fill="none" stroke="#4a7fb5" stroke-width="1.3"/><path d="M5 8 h6 M5 11.5 h10 M5 15 h10 M5 18 h7" stroke="#4a7fb5" stroke-width="1.2"/></svg>
<div class="t" style="left:1365px;top:110.5px;font-size:16px;line-height:20px;color:#333;letter-spacing:-0.3px;-webkit-text-stroke:0.3px #333;">Structures Report Final</div>
<svg style="left:1337px;top:138px;" width="24" height="24" viewBox="0 0 24 24"><path d="M21 2 C14 3 9 8 7 14 L11 18 C17 15 21 10 21 2 Z" fill="#d4d4d4" stroke="#aaa"/><path d="M7 14 L3 15 L7 10 Z M11 18 L10 22 L15 18 Z" fill="#b0b0b0"/><path d="M4 19 L2 22 L6 21 Z" fill="#999"/></svg>
<div class="t" style="left:1365px;top:140.0px;font-size:16px;line-height:20px;color:#333;letter-spacing:-0.3px;-webkit-text-stroke:0.3px #333;">Takeoff Manager</div>
<svg style="left:1551px;top:80px;" width="24" height="20" viewBox="0 0 24 20"><path d="M2 11 L8 17 L22 3" fill="none" stroke="#3da24a" stroke-width="4.2"/></svg>
<div class="t" style="left:1579px;top:81.5px;font-size:16px;line-height:20px;color:#333;letter-spacing:-0.3px;-webkit-text-stroke:0.3px #333;">QC Quick</div>
<svg style="left:1551px;top:108px;" width="24" height="24" viewBox="0 0 24 24"><path d="M2 6 L8 3 L20 3 L22 6 L22 21 L2 21 Z" fill="#e8c92a"/><rect x="7" y="2" width="12" height="6" fill="#bbb"/><path d="M5 13 L10 18 L20 8" fill="none" stroke="#2f9e3a" stroke-width="3.6"/></svg>
<div class="t" style="left:1579px;top:110.5px;font-size:16px;line-height:20px;color:#333;letter-spacing:-0.3px;-webkit-text-stroke:0.3px #333;">QC Project</div>
<svg style="left:1551px;top:138px;" width="24" height="24" viewBox="0 0 24 24"><path d="M2 2 L9 9 M9 2 L2 9" stroke="#d22" stroke-width="2.2"/><rect x="4" y="11" width="18" height="11" fill="#eee" stroke="#333" stroke-width="1.6"/><rect x="7" y="14" width="4" height="6" fill="none" stroke="#333"/><rect x="14" y="14" width="5" height="6" fill="none" stroke="#333"/><path d="M11 7 h8 v4" fill="none" stroke="#333" stroke-width="1.4"/></svg>
<div class="t" style="left:1579px;top:140.0px;font-size:16px;line-height:20px;color:#333;letter-spacing:-0.3px;-webkit-text-stroke:0.3px #333;">QC STOP</div>
<svg style="left:1714px;top:78px;" width="38" height="44" viewBox="0 0 38 44"><defs><linearGradient id="gdb" x1="0" x2="1"><stop offset="0" stop-color="#8a8a8a"/><stop offset=".45" stop-color="#e4e4e4"/><stop offset="1" stop-color="#8a8a8a"/></linearGradient></defs><path d="M2 7 L2 37 C2 45 36 45 36 37 L36 7 Z" fill="url(#gdb)"/><ellipse cx="19" cy="7" rx="17" ry="6" fill="#d9d9d9" stroke="#999"/><path d="M2 17 C2 24 36 24 36 17 M2 27 C2 34 36 34 36 27" fill="none" stroke="#777" stroke-width="1.6"/></svg>
<div class="t c" style="left:1732px;top:121.5px;font-size:16px;line-height:20px;color:#333;letter-spacing:-0.3px;-webkit-text-stroke:0.3px #333;">Explore</div>
<div class="t c" style="left:1732px;top:121.5px;font-size:16px;line-height:20px;color:#333;letter-spacing:-0.3px;-webkit-text-stroke:0.3px #333;"></div><div class="t c" style="left:1732px;top:137.5px;font-size:16px;line-height:20px;color:#333;letter-spacing:-0.3px;-webkit-text-stroke:0.3px #333;">Directories <span style="font-size:9px;color:#666;position:relative;top:-2px;">&#9660;</span></div>
<svg style="left:1801px;top:80px;" width="32" height="40" viewBox="0 0 32 40"><rect x="1" y="1" width="30" height="38" rx="2" fill="#2a8fd6" stroke="#1b6db0"/><rect x="5" y="5" width="22" height="8" fill="#e9f3fb"/><g fill="#e9f3fb"><rect x="5" y="17" width="5" height="4"/><rect x="13.5" y="17" width="5" height="4"/><rect x="22" y="17" width="5" height="4"/><rect x="5" y="24" width="5" height="4"/><rect x="13.5" y="24" width="5" height="4"/><rect x="22" y="24" width="5" height="4"/><rect x="5" y="31" width="5" height="4"/><rect x="13.5" y="31" width="5" height="4"/><rect x="22" y="31" width="5" height="4"/></g></svg>
<div class="t c" style="left:1817px;top:121.5px;font-size:16px;line-height:20px;color:#333;letter-spacing:-0.3px;-webkit-text-stroke:0.3px #333;">FDOT</div>
<div class="t c" style="left:1817px;top:121.5px;font-size:16px;line-height:20px;color:#333;letter-spacing:-0.3px;-webkit-text-stroke:0.3px #333;"></div><div class="t c" style="left:1817px;top:137.5px;font-size:16px;line-height:20px;color:#333;letter-spacing:-0.3px;-webkit-text-stroke:0.3px #333;">Links <span style="font-size:9px;color:#666;position:relative;top:-2px;">&#9660;</span></div>
<svg style="left:1864px;top:82px;" width="34" height="34" viewBox="0 0 34 34"><defs><radialGradient id="ggl" cx=".35" cy=".3" r=".8"><stop offset="0" stop-color="#9fd0f5"/><stop offset=".5" stop-color="#2f84d2"/><stop offset="1" stop-color="#123e7a"/></radialGradient></defs><circle cx="17" cy="17" r="16" fill="url(#ggl)"/><path d="M9 9 Q14 6 18 10 Q16 15 11 16 Q7 14 9 9 Z M19 18 Q25 16 27 21 Q24 27 20 25 Z" fill="#7fc0ee" opacity=".7"/></svg>
<div class="t c" style="left:1881px;top:121.5px;font-size:16px;line-height:20px;color:#333;letter-spacing:-0.3px;-webkit-text-stroke:0.3px #333;">Web</div>
<div class="t c" style="left:1881px;top:121.5px;font-size:16px;line-height:20px;color:#333;letter-spacing:-0.3px;-webkit-text-stroke:0.3px #333;"></div><div class="t c" style="left:1881px;top:137.5px;font-size:16px;line-height:20px;color:#333;letter-spacing:-0.3px;-webkit-text-stroke:0.3px #333;">Links <span style="font-size:9px;color:#666;position:relative;top:-2px;">&#9660;</span></div>
<svg style="left:1938px;top:76px;" width="42" height="46" viewBox="0 0 42 46"><defs><linearGradient id="gen1" x1="0" y1="0" x2="0" y2="1"><stop offset="0" stop-color="#c8eafc"/><stop offset="1" stop-color="#8cc4f0"/></linearGradient><linearGradient id="gen2" x1="0" y1="0" x2="0" y2="1"><stop offset="0" stop-color="#f6b85a"/><stop offset="1" stop-color="#fbe6b0"/></linearGradient></defs><path d="M4 21 L19 3 L38 12 L38 36 L3 45 Z" fill="url(#gen1)" stroke="#8aa6d6" stroke-width="1.2"/><path d="M4 21 L19 3 L38 12 L24 22 L14 24 Z" fill="url(#gen2)"/><path d="M9 20 L20 12 L33 15 L22 26 L13 26 Z" fill="#fff"/><path d="M4 21 L16 27 L22 25 L38 12 L38 36 L3 45 Z" fill="url(#gen1)"/><path d="M16 27 L5 43 M22 25 L37 35" stroke="#9cc8ee" stroke-width="1"/><path d="M3 45 L38 36" stroke="#7a96c8" stroke-width="1.6"/></svg>
<div class="t c" style="left:1958px;top:121.5px;font-size:16px;line-height:20px;color:#333;letter-spacing:-0.3px;-webkit-text-stroke:0.3px #333;">CADD</div>
<div class="t c" style="left:1958px;top:121.5px;font-size:16px;line-height:20px;color:#333;letter-spacing:-0.3px;-webkit-text-stroke:0.3px #333;"></div><div class="t c" style="left:1958px;top:137.5px;font-size:16px;line-height:20px;color:#333;letter-spacing:-0.3px;-webkit-text-stroke:0.3px #333;">Links <span style="font-size:9px;color:#666;position:relative;top:-2px;">&#9660;</span></div>
<svg style="left:2013px;top:77px;" width="46" height="46" viewBox="0 0 46 46"><circle cx="23" cy="23" r="22" fill="#1d3c58"/><rect x="9" y="11" width="28" height="20" rx="2.5" fill="#f4f1ee"/><rect x="9" y="29" width="28" height="3" fill="#16304a"/><path d="M14 14.5 h18" stroke="#16304a" stroke-width="2"/><circle cx="23" cy="25" r="4.2" fill="#f6d6dc" stroke="#e8a0b0" stroke-width="1"/><circle cx="23" cy="25" r="1.5" fill="#e0405a"/><path d="M23 17 v4 M19 18 Q19 22 23 21 Q27 22 27 18" stroke="#8aa0b0" stroke-width="1.2" fill="none"/><path d="M23 30 Q22 39 29 38 Q34 37 33 31" stroke="#6ab0c8" stroke-width="1.8" fill="none"/></svg>
<div class="t c" style="left:2035px;top:125.5px;font-size:16px;line-height:20px;color:#333;letter-spacing:-0.3px;-webkit-text-stroke:0.3px #333;">WorkSpace</div><div class="t c" style="left:2035px;top:141.5px;font-size:16px;line-height:20px;color:#333;letter-spacing:-0.3px;-webkit-text-stroke:0.3px #333;">Doctor</div>
<svg style="left:2082px;top:76px;" width="46" height="46" viewBox="0 0 46 46"><path d="M4 5 L16 4 L22 7 L33 5 L36 9 L42 27 L42 36 L38 40 L34 39 L30 30 L29 20 L24 14 L14 12 L6 10 Z" fill="#fafcff" stroke="#2a4fa3" stroke-width="1.6"/><path d="M27 11 Q14 16 7 24 Q16 28 25 33 Q14 36 8 41" fill="none" stroke="#48483e" stroke-width="10" stroke-linejoin="round"/><path d="M27 11 Q14 16 7 24 Q16 28 25 33 Q14 36 8 41" fill="none" stroke="#d8b21a" stroke-width="1.8" stroke-dasharray="4 3"/></svg>
<div class="t c" style="left:2105px;top:125.5px;font-size:16px;line-height:20px;color:#333;letter-spacing:-0.3px;-webkit-text-stroke:0.3px #333;">About</div>
<div style="left:2px;top:196px;width:342px;height:1276px;background:#f0f0f0;"></div>
<div style="left:344px;top:196px;width:8px;height:1276px;background:#a9acad;"></div>
<div style="left:2px;top:196px;width:342px;height:27px;background:#c9c9c9;"></div>
<div class="t" style="left:6px;top:198.5px;font-size:17px;line-height:21px;color:#222;letter-spacing:-0.8px;">Explorer</div>
<svg style="left:281px;top:205px;" width="14" height="8" viewBox="0 0 14 8"><path d="M0 0 L14 0 L7 8 Z" fill="#111"/></svg>
<svg style="left:303px;top:200px;" width="12" height="18" viewBox="0 0 12 18"><path d="M3 1 L9 1 L9 9 L11 9 L11 11 L1 11 L1 9 L3 9 Z" fill="none" stroke="#111" stroke-width="1.8"/><path d="M6 11 L6 17" stroke="#111" stroke-width="1.8"/><path d="M7.5 2 v7" stroke="#111" stroke-width="1.5"/></svg>
<svg style="left:324px;top:202px;" width="14" height="14" viewBox="0 0 14 14"><path d="M1 1 L13 13 M13 1 L1 13" stroke="#111" stroke-width="2.6"/></svg>
<div style="left:8px;top:228px;width:62px;height:24px;background:#ededed;border:1px solid #e2e2e2;"></div>
<svg style="left:14px;top:230px;" width="20" height="20" viewBox="0 0 20 20"><rect x="1" y="1" width="18" height="18" fill="#fff" stroke="#2aa0d6" stroke-width="1.8"/><text x="10" y="15" font-size="12" text-anchor="middle" fill="#2aa0d6" font-family="Liberation Sans">V8</text></svg>
<div class="t" style="left:42px;top:232.0px;font-size:16px;line-height:20px;color:#222;letter-spacing:-1.0px;-webkit-text-stroke:0.3px #222;">File</div>
<div style="left:72px;top:228px;width:161px;height:24px;background:#ededed;border:1px solid #e2e2e2;"></div>
<svg style="left:82px;top:231px;" width="14" height="18" viewBox="0 0 14 18"><rect x="1" y="1" width="12" height="16" rx="1.5" fill="#fbf6d8" stroke="#d8d2a8"/><rect x="3" y="1" width="8" height="5" fill="#e9e3ba"/></svg>
<div class="t" style="left:108px;top:232.0px;font-size:16px;line-height:20px;color:#222;letter-spacing:-1.0px;-webkit-text-stroke:0.3px #222;">OpenBridge Model</div>
<div style="left:8px;top:253px;width:114px;height:24px;background:#ededed;border:1px solid #e2e2e2;"></div>
<svg style="left:13px;top:256px;" width="20" height="18" viewBox="0 0 20 18"><path d="M1 12 L5 8 L17 8 L13 12 Z M1 15 L5 11 L17 11 L13 15 Z" fill="#7a5a3a"/><rect x="7" y="1" width="12" height="9" fill="#3a6fc4" stroke="#1d4a94"/><rect x="9" y="3" width="8" height="5" fill="#dfeafc"/></svg>
<div class="t" style="left:42px;top:256.7px;font-size:16px;line-height:20px;color:#222;letter-spacing:-1.0px;-webkit-text-stroke:0.3px #222;">Sheet Index</div>
<div style="left:126px;top:253px;width:76px;height:24px;background:#ededed;border:1px solid #e2e2e2;"></div>
<svg style="left:135px;top:256px;" width="20" height="19" viewBox="0 0 20 19"><g fill="#dfeafc" stroke="#2a6fd6" stroke-width="1.6"><rect x="1" y="1" width="8" height="5"/><rect x="9" y="7" width="8" height="5"/><rect x="9" y="13" width="8" height="5"/></g><path d="M5 6 v9.5 h4 M5 9.5 h4" fill="none" stroke="#2a6fd6" stroke-width="1.4"/></svg>
<div class="t" style="left:164px;top:256.7px;font-size:16px;line-height:20px;color:#222;letter-spacing:-1.0px;-webkit-text-stroke:0.3px #222;">Links</div>
<div style="left:4px;top:277px;width:189px;height:28px;background:#fdfdfd;"></div>
<svg style="left:17px;top:280px;" width="14" height="19" viewBox="0 0 14 19"><rect x="1" y="1" width="12" height="17" rx="1.5" fill="#fbf6d8" stroke="#d8d2a8"/><rect x="3" y="1" width="8" height="5" fill="#e9e3ba"/></svg>
<div class="t" style="left:41px;top:280.0px;font-size:16px;line-height:20px;color:#222;letter-spacing:-1.0px;-webkit-text-stroke:0.3px #222;">OpenBridge Standards</div>
<div style="left:196px;top:279px;width:75px;height:25px;background:#ededed;border:1px solid #e2e2e2;"></div>
<svg style="left:204px;top:283px;" width="17" height="19" viewBox="0 0 17 19"><defs><radialGradient id="ggr" cx=".4" cy=".35" r=".7"><stop offset="0" stop-color="#b9e8a0"/><stop offset="1" stop-color="#2f8a2a"/></radialGradient></defs><path d="M8.5 1 L16 6 L16 13 L8.5 18 L1 13 L1 6 Z" fill="#e8e8e8"/><circle cx="8.5" cy="10.5" r="6" fill="url(#ggr)"/></svg>
<div class="t" style="left:231px;top:282.5px;font-size:16px;line-height:20px;color:#222;letter-spacing:-1.0px;-webkit-text-stroke:0.3px #222;">Items</div>
<div style="left:8px;top:304px;width:334px;height:37px;background:linear-gradient(90deg,#f2f2f2,#fdfdfd 45%);"></div>
<svg style="left:15px;top:311px;" width="22" height="24" viewBox="0 0 22 24"><path d="M9 3 Q2 7 4 16 M13 21 Q20 17 18 8" fill="none" stroke="#8a979e" stroke-width="3"/><path d="M2 14 L5 20 L9 15 Z M20 10 L17 4 L13 9 Z" fill="#8a979e"/></svg>
<div style="left:45px;top:308px;width:1px;height:28px;background:#d0d0d0;"></div>
<svg style="left:49px;top:311px;" width="24" height="23" viewBox="0 0 24 23"><rect x="3" y="3" width="20" height="18" fill="#8b9399"/><circle cx="11" cy="11" r="8" fill="#3d8fd9"/><circle cx="9" cy="8" r="3" fill="#a6d2f5" opacity=".8"/></svg>
<svg style="left:80px;top:310px;" width="24" height="26" viewBox="0 0 24 26"><circle cx="15" cy="8" r="6" fill="#fff" stroke="#123a6e" stroke-width="2.2"/><path d="M12 8 h6 M15 5 v6" stroke="#123a6e" stroke-width="1.8"/><path d="M10 13 L2 22" stroke="#e8932a" stroke-width="3.6" stroke-linecap="round"/></svg>
<svg style="left:112px;top:312px;" width="20" height="20" viewBox="0 0 20 20"><rect x="1" y="1" width="5" height="5" fill="none" stroke="#d4d4d4"/><rect x="12" y="1" width="5" height="5" fill="none" stroke="#d4d4d4"/><rect x="1" y="12" width="5" height="5" fill="#1d6fd6"/><rect x="12" y="12" width="5" height="5" fill="none" stroke="#d4d4d4"/></svg>
<div style="left:141px;top:308px;width:1px;height:28px;background:#d0d0d0;"></div>
<div style="left:8px;top:344px;width:280px;height:27px;background:#fff;border:2px solid #8a8a8a;"></div>
<div class="t" style="left:13px;top:348.0px;font-size:15px;line-height:18px;color:#8a8a8a;font-style:italic;letter-spacing:-0.6px;">Search</div>
<svg style="left:264px;top:348px;" width="18" height="19" viewBox="0 0 18 19"><circle cx="11" cy="6.5" r="4.5" fill="none" stroke="#1e62c6" stroke-width="1.8"/><path d="M8 10 L1 18" stroke="#1e62c6" stroke-width="2.2"/></svg>
<svg style="left:291px;top:348px;" width="18" height="20" viewBox="0 0 18 20"><circle cx="10" cy="6.5" r="4.5" fill="none" stroke="#1e62c6" stroke-width="1.8"/><path d="M7 10 L1 17" stroke="#1e62c6" stroke-width="2.2"/><path d="M8 14.5 h9 M8 17.5 h9" stroke="#1e62c6" stroke-width="1.4"/></svg>
<svg style="left:317px;top:350px;" width="12" height="14" viewBox="0 0 12 14"><path d="M1 1 L6 6 L11 1 M1 7 L6 12 L11 7" fill="none" stroke="#1e62c6" stroke-width="1.8"/></svg>
<div style="left:8px;top:376px;width:328px;height:1088px;background:#fff;border:2px solid #9a9a9a;"></div>
<div style="left:312px;top:378px;width:22px;height:1084px;background:#fcfcfc;"></div>
<svg style="left:316px;top:384px;" width="13" height="8" viewBox="0 0 13 8"><path d="M0 8 L13 8 L6.5 0 Z" fill="#8a8a8a"/></svg>
<div style="left:318px;top:539px;width:12px;height:900px;background:#c9c9d0;"></div>
<div style="left:10px;top:1440px;width:302px;height:22px;background:#f0f0f0;"></div>
<div style="left:125px;top:386px;width:18px;height:18px;background:#f0f0f4;border:1px solid #dcdce4;"></div>
<div class="t" style="left:190px;top:387.0px;font-size:16px;line-height:20px;color:#3a3a3a;letter-spacing:-0.1px;max-width:118px;overflow:hidden;-webkit-text-stroke:0.3px #3a3a3a;">Corridor</div>
<div style="left:125px;top:418px;width:18px;height:18px;background:#f0f0f4;border:1px solid #dcdce4;"></div>
<div class="t" style="left:190px;top:419.0px;font-size:16px;line-height:20px;color:#3a3a3a;letter-spacing:-0.1px;max-width:118px;overflow:hidden;-webkit-text-stroke:0.3px #3a3a3a;">Superelevation</div>
<div style="left:125px;top:450.5px;width:18px;height:18px;background:#f0f0f4;border:1px solid #dcdce4;"></div>
<div class="t" style="left:190px;top:451.5px;font-size:16px;line-height:20px;color:#3a3a3a;letter-spacing:-0.1px;max-width:118px;overflow:hidden;-webkit-text-stroke:0.3px #3a3a3a;">Linear Template</div>
<div style="left:125px;top:482.5px;width:18px;height:18px;background:#f0f0f4;border:1px solid #dcdce4;"></div>
<div class="t" style="left:190px;top:483.5px;font-size:16px;line-height:20px;color:#3a3a3a;letter-spacing:-0.1px;max-width:118px;overflow:hidden;-webkit-text-stroke:0.3px #3a3a3a;">Surface Templat</div>
<div style="left:125px;top:515px;width:18px;height:18px;background:#f0f0f4;border:1px solid #dcdce4;"></div>
<div class="t" style="left:190px;top:516.0px;font-size:16px;line-height:20px;color:#3a3a3a;letter-spacing:-0.1px;max-width:118px;overflow:hidden;-webkit-text-stroke:0.3px #3a3a3a;">Linear</div>
<div style="left:125px;top:547px;width:18px;height:18px;background:#f0f0f4;border:1px solid #dcdce4;"></div>
<div class="t" style="left:190px;top:548.0px;font-size:16px;line-height:20px;color:#3a3a3a;letter-spacing:-0.1px;max-width:118px;overflow:hidden;-webkit-text-stroke:0.3px #3a3a3a;">Point</div>
<div style="left:125px;top:579.5px;width:18px;height:18px;background:#f0f0f4;border:1px solid #dcdce4;"></div>
<div class="t" style="left:190px;top:580.5px;font-size:16px;line-height:20px;color:#3a3a3a;letter-spacing:-0.1px;max-width:118px;overflow:hidden;-webkit-text-stroke:0.3px #3a3a3a;">Mesh</div>
<div style="left:125px;top:611.5px;width:18px;height:18px;background:#f0f0f4;border:1px solid #dcdce4;"></div>
<div class="t" style="left:190px;top:612.5px;font-size:16px;line-height:20px;color:#3a3a3a;letter-spacing:-0.1px;max-width:118px;overflow:hidden;-webkit-text-stroke:0.3px #3a3a3a;">Trace Slope</div>
<svg style="left:162px;top:384px;" width="24" height="24" viewBox="0 0 24 24"><g fill="none" stroke-width="2.6"><path d="M6 2 Q1 12 6 22" stroke="#1b1b6b"/><path d="M12 2 Q7 12 12 22" stroke="#1b1b6b"/><path d="M18 2 Q13 12 18 22" stroke="#333"/></g><path d="M3 7 L20 5 M3 17 L20 15" stroke="#d43a8a" stroke-width="2"/></svg>
<svg style="left:163px;top:417px;" width="22" height="22" viewBox="0 0 22 22"><g fill="none" stroke="#d42a2a" stroke-width="1.8"><path d="M5 3 L20 3 L17 19 L2 19 Z M12 3 L9 19 M3.5 11 L18.5 11"/></g></svg>
<svg style="left:162px;top:449px;" width="24" height="22" viewBox="0 0 24 22"><path d="M2 19 Q10 6 22 3" fill="none" stroke="#f29a1a" stroke-width="2.6"/><path d="M5 19 Q12 10 22 8" fill="none" stroke="#3aa6e6" stroke-width="2.6"/><path d="M9 19 Q14 14 22 13" fill="none" stroke="#d43a8a" stroke-width="2.2"/><path d="M2 21 L8 17" stroke="#7a3ab6" stroke-width="2"/></svg>
<svg style="left:162px;top:480px;" width="24" height="24" viewBox="0 0 24 24"><path d="M8 2 L21 7 L19 16 L6 12 Z" fill="#1b2b7b"/><path d="M2 20 Q10 10 22 16" fill="none" stroke="#f29a1a" stroke-width="3"/><path d="M2 23 Q10 16 22 21" fill="none" stroke="#3ac66a" stroke-width="2.4"/><path d="M4 16 L9 11" stroke="#d42a2a" stroke-width="2"/></svg>
<svg style="left:162px;top:513px;" width="24" height="24" viewBox="0 0 24 24"><circle cx="8" cy="8" r="6" fill="#d8582a"/><path d="M8 2 A6 6 0 0 1 14 8 L8 8 Z" fill="#3a8a3a"/><path d="M3 21 Q8 12 13 14 T22 5" fill="none" stroke="#e0507a" stroke-width="1.8"/></svg>
<svg style="left:165px;top:547px;" width="20" height="20" viewBox="0 0 20 20"><path d="M10 1 L12 8 L19 10 L12 12 L10 19 L8 12 L1 10 L8 8 Z" fill="#555"/></svg>
<svg style="left:162px;top:577px;" width="24" height="24" viewBox="0 0 24 24"><path d="M3 7 L13 2 L22 9 L18 21 L7 19 Z" fill="#2b2b6b"/><path d="M3 7 L18 21 M13 2 L7 19 M22 9 L7 19" stroke="#e8e8f4" stroke-width="1.2"/><path d="M6 21 L10 23" stroke="#d42a2a" stroke-width="2"/></svg>
<svg style="left:162px;top:611px;" width="24" height="18" viewBox="0 0 24 18"><path d="M1 3 Q6 0 12 3 T23 3 L23 17 L1 17 Z" fill="#3a8fe0"/><path d="M1 8 Q6 5 12 8 T23 8" stroke="#cfe6fb" stroke-width="1.6" fill="none"/></svg>
<svg style="left:15px;top:1444px;" width="10" height="14" viewBox="0 0 10 14"><path d="M9 1 L1 7 L9 13 Z" fill="#7a7a7a"/></svg>
<div style="left:12px;top:1477px;width:18px;height:36px;background:#5a9ee6;border:1px solid #3a7ad0;"></div>
<svg style="left:15px;top:1492px;" width="12" height="18" viewBox="0 0 12 18"><path d="M1 2 L10 9 L1 16" fill="none" stroke="#f0a62a" stroke-width="3"/></svg>
<div style="left:4px;top:1482px;width:3px;height:26px;border-left:3px dotted #9a9a9a;"></div>
<div style="left:352px;top:196px;width:1808px;height:42px;background:linear-gradient(#9fb8d8,#c7d8ed);"></div>
<div style="left:2160px;top:196px;width:6px;height:1276px;background:#a9acad;"></div>
<svg style="left:360px;top:211px;" width="22" height="20" viewBox="0 0 22 20"><path d="M2 5 Q6 2 10 6 L10 17 Q6 14 2 16 Z M20 5 Q16 2 12 6 L12 17 Q16 14 20 16 Z" fill="#1d7fe0"/><path d="M1 3 L4 1 M21 3 L18 1" stroke="#9fd0f5" stroke-width="2"/></svg>
<div class="t" style="left:386px;top:211.5px;font-size:17px;line-height:21px;color:#111;letter-spacing:-0.7px;">View 1, Default</div>
<div style="left:2023px;top:207px;width:41px;height:26px;border:1px solid #7f94ae;border-radius:3px;background:linear-gradient(#dbe6f3,#b9cbe2 50%,#a9bdd8 51%,#c5d5e8);"></div>
<div style="left:2069px;top:207px;width:41px;height:26px;border:1px solid #7f94ae;border-radius:3px;background:linear-gradient(#dbe6f3,#b9cbe2 50%,#a9bdd8 51%,#c5d5e8);"></div>
<div style="left:2115px;top:207px;width:41px;height:26px;border:1px solid #6a2a22;border-radius:3px;background:linear-gradient(#e08a7a,#c8402c 50%,#b8301c 51%,#d0604c);"></div>
<div style="left:2036px;top:219px;width:15px;height:5px;background:#fff;border:1px solid #5a6a7e;"></div>
<svg style="left:2080px;top:212px;" width="18" height="16" viewBox="0 0 18 16"><rect x="5" y="1" width="11" height="9" fill="#dfe8f3" stroke="#4a5a6e" stroke-width="1.6"/><rect x="1" y="6" width="11" height="9" fill="#dfe8f3" stroke="#4a5a6e" stroke-width="1.6"/></svg>
<svg style="left:2128px;top:213px;" width="16" height="14" viewBox="0 0 16 14"><path d="M2 2 L14 12 M14 2 L2 12" stroke="#fff" stroke-width="3.4"/></svg>
<div style="left:352px;top:238px;width:1808px;height:32px;background:#f3f3f3;"></div>
<svg style="left:357px;top:241px;" width="24" height="26" viewBox="0 0 24 26"><path d="M2 20 L2 5 L21 5 L21 20" fill="#fff" stroke="#1b86d8" stroke-width="1.8"/><rect x="1" y="3" width="21" height="4.5" fill="#1b86d8"/><circle cx="9" cy="17" r="5" fill="#1b86d8"/><rect x="8.2" y="14" width="1.8" height="6" fill="#dbeefc"/><rect x="15" y="13" width="7" height="8" fill="#dbeefc" stroke="#1b86d8" stroke-width="1.2"/></svg>
<svg style="left:388px;top:251px;" width="10" height="6" viewBox="0 0 10 6"><path d="M0 0 L10 0 L5 6 Z" fill="#111"/></svg>
<svg style="left:406px;top:241px;" width="24" height="26" viewBox="0 0 24 26"><path d="M11 12 L11 5 Q11 2 14 2 L19 2 Q22 4 22 7 L22 13 Q22 16 19 16 L15 16" fill="none" stroke="#7ac62a" stroke-width="2.8"/><circle cx="8.5" cy="16.5" r="6.5" fill="#e3f2fd" stroke="#4aa6e6" stroke-width="2.4"/></svg>
<svg style="left:420px;top:261px;" width="8" height="5" viewBox="0 0 8 5"><path d="M0 0 L8 0 L4 5 Z" fill="#111"/></svg>
<svg style="left:436px;top:241px;" width="24" height="26" viewBox="0 0 24 26"><circle cx="12" cy="13" r="5.5" fill="#f29a1a"/><g stroke="#e8b21a" stroke-width="2"><path d="M12 1 v5 M12 20 v5 M0 13 h5 M19 13 h5 M3.5 4.5 l3.5 3.5 M17 18 l3.5 3.5 M20.5 4.5 l-3.5 3.5 M7 18 l-3.5 3.5"/></g></svg>
<svg style="left:466px;top:251px;" width="10" height="6" viewBox="0 0 10 6"><path d="M0 0 L10 0 L5 6 Z" fill="#111"/></svg>
<div style="left:484px;top:241px;width:1px;height:27px;background:#b8b8b8;"></div>
<svg style="left:492px;top:241px;" width="24" height="26" viewBox="0 0 24 26"><rect x="9" y="1" width="4" height="11" fill="#1b86d8"/><rect x="5" y="12" width="12" height="4" fill="#1b86d8"/><path d="M4 16 L18 16 L19 25 L3 25 Z" fill="#9aa6ae"/></svg>
<svg style="left:521px;top:241px;" width="24" height="26" viewBox="0 0 24 26"><circle cx="15" cy="8" r="6" fill="#fff" stroke="#123a6e" stroke-width="2.2"/><path d="M12 8 h6 M15 5 v6" stroke="#123a6e" stroke-width="1.8"/><path d="M10 13 L2 22" stroke="#e8932a" stroke-width="3.6" stroke-linecap="round"/></svg>
<svg style="left:551px;top:241px;" width="24" height="26" viewBox="0 0 24 26"><circle cx="15" cy="8" r="6" fill="#fff" stroke="#123a6e" stroke-width="2.2"/><path d="M12 8 h6" stroke="#123a6e" stroke-width="1.8"/><path d="M10 13 L2 22" stroke="#e8932a" stroke-width="3.6" stroke-linecap="round"/></svg>
<svg style="left:579px;top:241px;" width="26" height="26" viewBox="0 0 26 26"><rect x="1" y="3" width="20" height="20" fill="none" stroke="#333" stroke-width="1.4" stroke-dasharray="3 2"/><circle cx="15" cy="9" r="6" fill="#fff" stroke="#123a6e" stroke-width="2.2"/><path d="M10 14 L3 22" stroke="#e8932a" stroke-width="3.6" stroke-linecap="round"/></svg>
<svg style="left:608px;top:241px;" width="24" height="26" viewBox="0 0 24 26"><rect x="1.5" y="3.5" width="21" height="19" fill="#fff" stroke="#1b86d8" stroke-width="2.6"/><path d="M5 10 v-3 h3 M16 7 h3 v3 M19 16 v3 h-3 M8 19 h-3 v-3" fill="none" stroke="#1b86d8" stroke-width="1.6"/></svg>
<svg style="left:636px;top:241px;" width="28" height="26" viewBox="0 0 28 26"><path d="M2 13 L12 4 L12 9 L17 9 L17 17 L12 17 L12 22 Z" fill="#1b86d8"/><rect x="18" y="6" width="5" height="16" fill="#1b86d8"/></svg>
<svg style="left:656px;top:262px;" width="8" height="5" viewBox="0 0 8 5"><path d="M0 0 L8 0 L4 5 Z" fill="#111"/></svg>
<svg style="left:668px;top:241px;" width="24" height="26" viewBox="0 0 24 26"><path d="M5 12 L5 6 Q7 3 9 6 L10 4 Q12 2 13 5 L15 4 Q17 3 18 6 L21 14 Q22 21 16 23 L10 23 Q6 20 3 15 Q3 12 5 12 Z" fill="#fff" stroke="#222" stroke-width="1.6"/></svg>
<div style="left:697px;top:241px;width:1px;height:27px;background:#b8b8b8;"></div>
<svg style="left:704px;top:241px;" width="24" height="26" viewBox="0 0 24 26"><ellipse cx="7.5" cy="9" rx="4" ry="7.5" transform="rotate(6 7.5 9)" fill="#111"/><ellipse cx="11" cy="10" rx="2.2" ry="4" fill="#f3f3f3"/><ellipse cx="17.5" cy="16" rx="4" ry="7.5" transform="rotate(-6 17.5 16)" fill="#111"/><ellipse cx="14" cy="17" rx="2.2" ry="4" fill="#f3f3f3"/></svg>
<svg style="left:734px;top:241px;" width="24" height="26" viewBox="0 0 24 26"><path d="M2 10 L10 5 L22 14 L18 19 L6 17 Z" fill="#e4e4e4" stroke="#bdbdbd" stroke-width="1.4"/></svg>
<svg style="left:764px;top:241px;" width="24" height="26" viewBox="0 0 24 26"><rect x="1" y="4" width="18" height="14" fill="#eee" stroke="#7a8ba0" stroke-width="1.4"/><path d="M6 2 L22 1" stroke="#1b86d8" stroke-width="2"/><path d="M9 14 Q14 6 20 12 L17 12 L21 17 L22 10" fill="#222"/></svg>
<svg style="left:792px;top:241px;" width="26" height="26" viewBox="0 0 26 26"><rect x="2" y="5" width="21" height="15" fill="#fff" stroke="#1b86d8" stroke-width="1.8"/><rect x="1" y="4" width="23" height="4" fill="#1b86d8"/><path d="M20 14 h-9" stroke="#1b86d8" stroke-width="2.6"/><path d="M12 10 l-5 4 l5 4 Z" fill="#1b86d8"/></svg>
<svg style="left:822px;top:241px;" width="26" height="26" viewBox="0 0 26 26"><rect x="2" y="5" width="21" height="15" fill="#fff" stroke="#1b86d8" stroke-width="1.8"/><rect x="1" y="4" width="23" height="4" fill="#1b86d8"/><path d="M5 14 h9" stroke="#1b86d8" stroke-width="2.6"/><path d="M13 10 l5 4 l-5 4 Z" fill="#1b86d8"/></svg>
<div style="left:852px;top:241px;width:1px;height:27px;background:#b8b8b8;"></div>
<svg style="left:859px;top:241px;" width="24" height="26" viewBox="0 0 24 26"><rect x="9" y="3" width="13" height="9" fill="#fff" stroke="#1b86d8" stroke-width="2.2"/><rect x="2" y="11" width="13" height="9" fill="#fff" stroke="#1b86d8" stroke-width="2.2"/><path d="M20 15 v5 h-3" fill="none" stroke="#111" stroke-width="1.6"/></svg>
<svg style="left:889px;top:241px;" width="24" height="26" viewBox="0 0 24 26"><path d="M2 4 L22 4 L13 23 Z M2 4 L11 9 L22 4 M11 9 L13 23" fill="#fff" stroke="#222" stroke-width="1.8"/></svg>
<svg style="left:906px;top:262px;" width="8" height="5" viewBox="0 0 8 5"><path d="M0 0 L8 0 L4 5 Z" fill="#111"/></svg>
<svg style="left:918px;top:241px;" width="26" height="28" viewBox="0 0 26 28"><path d="M3 4 Q10 0 14 5 Q19 6 16 12 L8 14 Q1 12 3 4 Z" fill="#eaf4fd" stroke="#1b86d8" stroke-width="1.8"/><path d="M9 10 L19 22 M19 10 L9 22" stroke="#222" stroke-width="2"/><circle cx="8" cy="23" r="2.2" fill="none" stroke="#222" stroke-width="1.4"/><circle cx="20" cy="23" r="2.2" fill="none" stroke="#222" stroke-width="1.4"/></svg>
<svg style="left:936px;top:263px;" width="8" height="5" viewBox="0 0 8 5"><path d="M0 0 L8 0 L4 5 Z" fill="#111"/></svg>
<svg style="left:948px;top:241px;" width="26" height="26" viewBox="0 0 26 26"><path d="M3 6 Q8 0 13 4 Q19 4 17 10 L8 12 Q1 11 3 6 Z" fill="#eaf4fd" stroke="#1b86d8" stroke-width="1.8"/><rect x="8" y="11" width="15" height="12" fill="none" stroke="#222" stroke-width="1.6" stroke-dasharray="3 2"/></svg>
<svg style="left:352px;top:270px;" width="1808" height="1202" viewBox="0 0 1808 1202"><defs><linearGradient id="bg3d" x1="0" y1="0" x2="1.2" y2="1.664"><stop offset="0" stop-color="#abafae"/><stop offset="1" stop-color="#767a79"/></linearGradient><linearGradient id="ftl" x1="0" y1="0" x2="1" y2="0"><stop offset="0" stop-color="#585858"/><stop offset="1" stop-color="#464646"/></linearGradient></defs><rect width="1808" height="1202" fill="url(#bg3d)"/><polygon points="0.0,402.0 298.0,350.0 1023.0,229.2 1388.0,175.0 1808.0,127.0 1808.0,167.8 1388.0,216.6 1023.0,267.8 499.0,350.0 0.0,432.0" fill="#929292" /><polygon points="0.0,432.0 499.0,350.0 1023.0,267.8 1388.0,216.6 1808.0,167.8 1808.0,274.8 1168.0,362.2 0.0,521.7" fill="#323232" /><polygon points="0.0,521.7 1168.0,362.2 1808.0,274.8 1808.0,321.3 1184.0,402.2 0.0,555.8" fill="#8c8c8c" /><polygon points="0.0,555.8 1184.0,402.2 1808.0,321.3 1808.0,406.0 1184.0,492.3 0.0,655.9" fill="#f7f7f3" /><polyline points="1184.0,488.8 1808.0,402.5" fill="none" stroke="#d8d8c8" stroke-width="2"/><polyline points="0.0,402.0 298.0,350.0 1023.0,229.2 1388.0,175.0 1808.0,127.0" fill="none" stroke="#222" stroke-width="1.5" stroke-dasharray="6 3"/><polyline points="1184.0,378.7 1808.0,298.8" fill="none" stroke="#555" stroke-width="1.2" stroke-dasharray="5 3"/><polyline points="1184.0,391.2 1808.0,311.3" fill="none" stroke="#555" stroke-width="1.2" stroke-dasharray="2 5"/><polygon points="1338.0,474.0 1556.0,444.0 1556.0,510.0 1434.0,516.0 1360.0,490.0" fill="#484848" /><polygon points="1514.0,450.0 1556.0,444.0 1556.0,467.0" fill="#3a3a3a" /><polygon points="1556.0,364.0 1610.0,358.0 1610.0,502.0 1556.0,508.0" fill="#8c8c8c" /><polygon points="1256.0,1016.0 1420.0,1050.0 1593.0,1030.0 1593.0,1202.0 1256.0,1202.0" fill="#8f8f8f" /><polygon points="1241.0,948.0 1375.0,930.0 1473.0,938.0 1605.0,963.0 1420.0,985.0" fill="#292929" /><polygon points="1360.0,488.0 1434.0,516.0 1423.0,963.0 1375.0,952.0" fill="#484848" /><polygon points="1434.0,516.0 1486.0,512.0 1473.0,946.0 1423.0,963.0" fill="#8a8a8a" /><polyline points="1486.0,512.0 1473.0,946.0" fill="none" stroke="#444" stroke-width="1.2" stroke-dasharray="7 9"/><polygon points="1256.6,1019.0 1268.0,1021.0 1268.0,1202.0 1256.6,1202.0" fill="#505050" /><polygon points="1294.0,1027.0 1306.5,1029.0 1306.5,1202.0 1294.0,1202.0" fill="#505050" /><polygon points="1332.6,1035.0 1345.0,1037.0 1345.0,1202.0 1332.6,1202.0" fill="#505050" /><polygon points="1371.5,1042.0 1384.0,1044.0 1384.0,1202.0 1371.5,1202.0" fill="#505050" /><polygon points="1410.7,1050.0 1422.5,1052.0 1422.5,1202.0 1410.7,1202.0" fill="#505050" /><polygon points="1460.5,1048.0 1472.0,1047.0 1472.0,1202.0 1460.5,1202.0" fill="#505050" /><polygon points="1510.8,1042.0 1522.6,1041.0 1522.6,1202.0 1510.8,1202.0" fill="#505050" /><polygon points="1560.6,1036.0 1573.0,1035.0 1573.0,1202.0 1560.6,1202.0" fill="#505050" /><polygon points="1241.0,948.0 1420.0,985.0 1420.0,1052.0 1241.0,1016.0" fill="url(#ftl)" /><polygon points="1420.0,985.0 1605.0,963.0 1605.0,1030.0 1420.0,1052.0" fill="#919191" /></svg>
<div style="left:2166px;top:196px;width:392px;height:1276px;background:#f0f0f0;"></div>
<div style="left:2166px;top:196px;width:392px;height:27px;background:#0f7fd6;"></div>
<div class="t" style="left:2170px;top:198.5px;font-size:17px;line-height:21px;color:#fff;letter-spacing:-0.75px;">Properties</div>
<svg style="left:2494px;top:206px;" width="13" height="7" viewBox="0 0 13 7"><path d="M0 0 L13 0 L6.5 7 Z" fill="#fff"/></svg>
<svg style="left:2516px;top:200px;" width="12" height="18" viewBox="0 0 12 18"><path d="M3 1 L9 1 L9 9 L11 9 L11 11 L1 11 L1 9 L3 9 Z" fill="none" stroke="#fff" stroke-width="1.8"/><path d="M6 11 L6 17" stroke="#fff" stroke-width="1.8"/><path d="M7.5 2 v7" stroke="#fff" stroke-width="1.5"/></svg>
<svg style="left:2537px;top:202px;" width="14" height="14" viewBox="0 0 14 14"><path d="M1 1 L13 13 M13 1 L1 13" stroke="#fff" stroke-width="2.6"/></svg>
<div style="left:2168px;top:225px;width:388px;height:309px;background:#fff;border:1px solid #9a9a9a;overflow:hidden;"></div>
<div style="left:2535px;top:227px;width:19px;height:305px;background:#f0f0f0;"></div>
<svg style="left:2538px;top:233px;" width="12" height="7" viewBox="0 0 12 7"><path d="M0 7 L12 7 L6 0 Z" fill="#606060"/></svg>
<svg style="left:2538px;top:520px;" width="12" height="7" viewBox="0 0 12 7"><path d="M0 0 L12 0 L6 7 Z" fill="#606060"/></svg>
<div style="left:2538px;top:248px;width:13px;height:72px;background:#cdcdcd;"></div>
<div style="left:2303px;top:421px;width:223px;height:32px;background:#3390f0;"></div>
<svg style="left:2179px;top:240px;" width="10" height="10" viewBox="0 0 10 10"><path d="M9 1 L9 9 L1 9 Z" fill="#222"/></svg>
<div class="t" style="left:2230px;top:236.0px;font-size:16px;line-height:20px;color:#3c3c3c;letter-spacing:-0.3px;-webkit-text-stroke:0.3px;">Elements (1)</div>
<svg style="left:2203px;top:234px;" width="24" height="22" viewBox="0 0 24 22"><path d="M3 10 L13 2 M6 14 L12 9" stroke="#555" stroke-width="1.8"/><circle cx="17" cy="16" r="3.5" fill="none" stroke="#555" stroke-width="1.8"/></svg>
<svg style="left:2205px;top:272px;" width="10" height="10" viewBox="0 0 10 10"><path d="M9 1 L9 9 L1 9 Z" fill="#222"/></svg>
<div class="t" style="left:2256px;top:268.0px;font-size:16px;line-height:20px;color:#3c3c3c;letter-spacing:-0.3px;-webkit-text-stroke:0.3px;">Unit 2 :: ConcBeam1</div>
<svg style="left:2229px;top:267px;" width="24" height="20" viewBox="0 0 24 20"><path d="M2 2 L2 8 L22 8 L22 2 M5 8 L5 17 M19 8 L19 17 M9 8 L9 13 M15 8 L15 13 M5 13 h14" fill="none" stroke="#2a96d8" stroke-width="2"/></svg>
<svg style="left:2232px;top:304px;" width="10" height="10" viewBox="0 0 10 10"><path d="M9 1 L9 9 L1 9 Z" fill="#222"/></svg>
<div class="t" style="left:2283px;top:300.0px;font-size:16px;line-height:20px;color:#3c3c3c;letter-spacing:-0.3px;-webkit-text-stroke:0.3px;">Pier 2 - Pier 4</div>
<svg style="left:2257px;top:298px;" width="20" height="24" viewBox="0 0 20 24"><path d="M2 2 L18 2 L18 5 L12 7 L12 17 L18 19 L18 22 L2 22 L2 19 L8 17 L8 7 L2 5 Z" fill="none" stroke="#444" stroke-width="1.7"/></svg>
<svg style="left:2258px;top:336px;" width="10" height="10" viewBox="0 0 10 10"><path d="M9 1 L9 9 L1 9 Z" fill="#222"/></svg>
<div class="t" style="left:2310px;top:332.0px;font-size:16px;line-height:20px;color:#3c3c3c;letter-spacing:-0.3px;-webkit-text-stroke:0.3px;">Beam-1</div>
<svg style="left:2282px;top:330px;" width="24" height="24" viewBox="0 0 24 24"><path d="M3 6 L14 2 L21 5 L21 9 L16 11 L16 14 L21 16 L21 19 L10 23 L3 20 L3 16 L8 14 L8 11 L3 9 Z M3 6 L10 9 L21 5 M10 9 L10 12" fill="none" stroke="#2a96d8" stroke-width="1.7"/></svg>
<svg style="left:2309px;top:363px;" width="24" height="20" viewBox="0 0 24 20"><path d="M3 8 L12 2 L21 5 L21 12 L12 18 L6 16 Z" fill="#eaf5fd" stroke="#2a96d8" stroke-width="1.7"/></svg>
<div class="t" style="left:2337px;top:364.0px;font-size:16px;line-height:20px;color:#3c3c3c;letter-spacing:-0.3px;-webkit-text-stroke:0.3px;">Haunch4</div>
<svg style="left:2309px;top:396px;" width="24" height="20" viewBox="0 0 24 20"><path d="M3 8 L12 2 L21 5 L21 12 L12 18 L6 16 Z" fill="#eaf5fd" stroke="#2a96d8" stroke-width="1.7"/></svg>
<div class="t" style="left:2337px;top:397.0px;font-size:16px;line-height:20px;color:#3c3c3c;letter-spacing:-0.3px;-webkit-text-stroke:0.3px;">Haunch8</div>
<svg style="left:2309px;top:425px;" width="24" height="26" viewBox="0 0 24 26"><path d="M7 5 L13 2 L18 4 L18 8 L15 9 L15 12 L18 14 L13 17 L7 15 L7 12 L10 11 L10 9 L7 8 Z" fill="none" stroke="#fff" stroke-width="1.6"/><path d="M2 21 Q12 18 22 21" fill="none" stroke="#fff" stroke-width="1.8"/><circle cx="2.5" cy="21" r="1.6" fill="#fff"/><circle cx="21.5" cy="21" r="1.6" fill="#fff"/></svg>
<div class="t" style="left:2337px;top:429.0px;font-size:16px;line-height:20px;color:#fff;letter-spacing:-0.3px;-webkit-text-stroke:0.3px;">Top Flange2</div>
<svg style="left:2309px;top:457px;" width="24" height="26" viewBox="0 0 24 26"><path d="M7 5 L13 2 L18 4 L18 8 L15 9 L15 12 L18 14 L13 17 L7 15 L7 12 L10 11 L10 9 L7 8 Z" fill="none" stroke="#2a96d8" stroke-width="1.6"/><path d="M2 21 Q12 18 22 21" fill="none" stroke="#2a96d8" stroke-width="1.8"/><circle cx="2.5" cy="21" r="1.6" fill="#2a96d8"/><circle cx="21.5" cy="21" r="1.6" fill="#2a96d8"/></svg>
<div class="t" style="left:2337px;top:462.0px;font-size:16px;line-height:20px;color:#3c3c3c;letter-spacing:-0.3px;-webkit-text-stroke:0.3px;">Top Flange6</div>
<svg style="left:2309px;top:490px;" width="24" height="26" viewBox="0 0 24 26"><path d="M7 5 L13 2 L18 4 L18 8 L15 9 L15 12 L18 14 L13 17 L7 15 L7 12 L10 11 L10 9 L7 8 Z" fill="none" stroke="#2a96d8" stroke-width="1.6"/><path d="M2 21 Q12 18 22 21" fill="none" stroke="#2a96d8" stroke-width="1.8"/><circle cx="2.5" cy="21" r="1.6" fill="#2a96d8"/><circle cx="21.5" cy="21" r="1.6" fill="#2a96d8"/></svg>
<div class="t" style="left:2337px;top:494.0px;font-size:16px;line-height:20px;color:#3c3c3c;letter-spacing:-0.3px;-webkit-text-stroke:0.3px;">Bottom Flange1</div>
<div style="left:2300px;top:523px;width:230px;height:10px;overflow:hidden;"><svg style="left:9px;top:-1px;" width="24" height="26" viewBox="0 0 24 26"><path d="M7 5 L13 2 L18 4 L18 8 L15 9 L15 12 L18 14 L13 17 L7 15 L7 12 L10 11 L10 9 L7 8 Z" fill="none" stroke="#2a96d8" stroke-width="1.6"/><path d="M2 21 Q12 18 22 21" fill="none" stroke="#2a96d8" stroke-width="1.8"/><circle cx="2.5" cy="21" r="1.6" fill="#2a96d8"/><circle cx="21.5" cy="21" r="1.6" fill="#2a96d8"/></svg><div class="t" style="left:37px;top:3.0px;font-size:16px;line-height:20px;color:#3c3c3c;letter-spacing:-0.3px;-webkit-text-stroke:0.3px;">Bottom Flange5</div></div>
<div style="left:2168px;top:540px;width:388px;height:930px;background:#f0f0f0;border:1px solid #9a9a9a;"></div>
<div style="left:2176px;top:549px;width:372px;height:62px;background:#fdfdfd;border-radius:5px;"></div>
<div style="left:2176px;top:549px;width:372px;height:30px;background:#cfe0f8;border-radius:5px 5px 0 0;"></div>
<div class="t" style="left:2211px;top:554.0px;font-size:16px;line-height:20px;color:#111;font-weight:bold;letter-spacing:0.7px;">Selection</div>
<svg style="left:2521px;top:559px;" width="14" height="10" viewBox="0 0 14 10"><path d="M1 8 L7 2 L13 8" fill="none" stroke="#222" stroke-width="3.2"/></svg>
<div style="left:2183px;top:584px;width:357px;height:25px;background:#fff;border:1px solid #9a9a9a;"></div>
<div style="left:2184px;top:585px;width:160px;height:23px;background:#f4f6fa;"></div>
<div class="t" style="left:2217px;top:588.0px;font-size:15px;line-height:18px;color:#8a8a8a;letter-spacing:-0.4px;">Name</div>
<div class="t" style="left:2356px;top:587.0px;font-size:16px;line-height:20px;color:#333;letter-spacing:0.5px;">Top Flange2</div>
<div style="left:2176px;top:621px;width:372px;height:30px;background:#f3f3f3;border:1px solid #cfcfcf;border-radius:5px;"></div>
<div class="t" style="left:2211px;top:626.0px;font-size:16px;line-height:20px;color:#222;letter-spacing:0.35px;">General</div>
<svg style="left:2521px;top:631px;" width="14" height="10" viewBox="0 0 14 10"><path d="M1 2 L7 8 L13 2" fill="none" stroke="#222" stroke-width="3.2"/></svg>
<div style="left:2176px;top:658px;width:372px;height:30px;background:#f3f3f3;border:1px solid #cfcfcf;border-radius:5px;"></div>
<div class="t" style="left:2211px;top:663.0px;font-size:16px;line-height:20px;color:#222;letter-spacing:0.35px;">Beam Segment Properties</div>
<svg style="left:2521px;top:668px;" width="14" height="10" viewBox="0 0 14 10"><path d="M1 2 L7 8 L13 2" fill="none" stroke="#222" stroke-width="3.2"/></svg>
<div style="left:2176px;top:696px;width:372px;height:30px;background:#f3f3f3;border:1px solid #cfcfcf;border-radius:5px;"></div>
<div class="t" style="left:2211px;top:701.0px;font-size:16px;line-height:20px;color:#222;letter-spacing:0.35px;">Solid</div>
<svg style="left:2521px;top:706px;" width="14" height="10" viewBox="0 0 14 10"><path d="M1 2 L7 8 L13 2" fill="none" stroke="#222" stroke-width="3.2"/></svg>
<div style="left:2176px;top:734px;width:372px;height:278px;background:#fdfdfd;border-radius:5px;"></div>
<div style="left:2176px;top:734px;width:372px;height:29px;background:#cfe0f8;border-radius:5px 5px 0 0;"></div>
<div class="t" style="left:2211px;top:738.0px;font-size:16px;line-height:20px;color:#111;font-weight:bold;letter-spacing:0.7px;">BeamSegment</div>
<svg style="left:2521px;top:743px;" width="14" height="10" viewBox="0 0 14 10"><path d="M1 8 L7 2 L13 8" fill="none" stroke="#222" stroke-width="3.2"/></svg>
<div style="left:2183px;top:768px;width:357px;height:239px;background:#fff;border:1px solid #9a9a9a;"></div>
<div style="left:2184px;top:769px;width:166px;height:237px;background:#f7f8fb;"></div>
<div class="t" style="left:2217px;top:771.0px;font-size:15px;line-height:18px;color:#222;letter-spacing:-0.2px;">Type</div>
<div class="t" style="left:2355px;top:770.0px;font-size:16px;line-height:20px;color:#111;font-weight:bold;letter-spacing:0.05px;">Steel Grade 36+</div>
<div class="t" style="left:2217px;top:792.5px;font-size:15px;line-height:18px;color:#8a8a8a;letter-spacing:-0.2px;">Section</div>
<div class="t" style="left:2355px;top:791.5px;font-size:16px;line-height:20px;color:#4a4a4a;letter-spacing:0.4px;-webkit-text-stroke:0.4px #4a4a4a;">Superstructure</div>
<div class="t" style="left:2217px;top:814.0px;font-size:15px;line-height:18px;color:#8a8a8a;letter-spacing:-0.2px;">PayItemNumber</div>
<div class="t" style="left:2355px;top:813.0px;font-size:16px;line-height:20px;color:#4a4a4a;letter-spacing:0.4px;-webkit-text-stroke:0.4px #4a4a4a;">0460  2  1</div>
<div class="t" style="left:2217px;top:835.5px;font-size:15px;line-height:18px;color:#8a8a8a;letter-spacing:-0.2px;">Description</div>
<div class="t" style="left:2355px;top:834.5px;font-size:16px;line-height:20px;color:#4a4a4a;letter-spacing:0.4px;-webkit-text-stroke:0.4px #4a4a4a;">Struct Steel, Carbon</div>
<div class="t" style="left:2217px;top:857.0px;font-size:15px;line-height:18px;color:#8a8a8a;letter-spacing:-0.2px;">Units</div>
<div class="t" style="left:2355px;top:856.0px;font-size:16px;line-height:20px;color:#4a4a4a;letter-spacing:0.4px;-webkit-text-stroke:0.4px #4a4a4a;">LS</div>
<div class="t" style="left:2217px;top:878.5px;font-size:15px;line-height:18px;color:#8a8a8a;letter-spacing:-0.2px;">Quantity</div>
<div class="t" style="left:2355px;top:877.5px;font-size:16px;line-height:20px;color:#4a4a4a;letter-spacing:0.4px;-webkit-text-stroke:0.4px #4a4a4a;">1</div>
<div class="t" style="left:2217px;top:900.0px;font-size:15px;line-height:18px;color:#8a8a8a;letter-spacing:-0.2px;">SecondaryUnits</div>
<div class="t" style="left:2355px;top:899.0px;font-size:16px;line-height:20px;color:#4a4a4a;letter-spacing:0.4px;-webkit-text-stroke:0.4px #4a4a4a;">LB</div>
<div class="t" style="left:2217px;top:921.5px;font-size:15px;line-height:18px;color:#8a8a8a;letter-spacing:-0.2px;">SecondaryQuantity</div>
<div class="t" style="left:2355px;top:920.5px;font-size:16px;line-height:20px;color:#4a4a4a;letter-spacing:0.4px;-webkit-text-stroke:0.4px #4a4a4a;">490</div>
<div class="t" style="left:2217px;top:943.0px;font-size:15px;line-height:18px;color:#8a8a8a;letter-spacing:-0.2px;">Location</div>
<div class="t" style="left:2355px;top:942.0px;font-size:16px;line-height:20px;color:#4a4a4a;letter-spacing:0.4px;-webkit-text-stroke:0.4px #4a4a4a;">Pier 2 - Pier 4</div>
<div class="t" style="left:2217px;top:964.5px;font-size:15px;line-height:18px;color:#222;letter-spacing:-0.2px;">DesignNotes</div>
<div class="t" style="left:2217px;top:986.0px;font-size:15px;line-height:18px;color:#222;letter-spacing:-0.2px;">BridgeNumber</div>
<div class="t" style="left:2355px;top:985.0px;font-size:16px;line-height:20px;color:#111;font-weight:bold;letter-spacing:0.05px;">123456</div>
<div style="left:397px;top:274px;width:978px;height:344px;background:#f0f0f0;border:1px solid #8a8a8a;box-shadow:0 4px 14px rgba(0,0,0,.35);"></div>
<div style="left:398px;top:275px;width:976px;height:40px;background:#fff;"></div>
<svg style="left:408px;top:284px;" width="23" height="23" viewBox="0 0 23 23"><rect width="23" height="23" rx="1" fill="#1a52a0"/><path d="M3 18.5 L8.5 9 C11 6 15.5 5 21 5 L20.5 8.2 C16.5 8.2 14.5 8.8 12.8 10 L8 18.5 Z" fill="#fff"/><path d="M10 18.5 L14 11.5 L17.8 11.5 L14 18.5 Z" fill="#fff"/></svg>
<div class="t" style="left:437px;top:285.0px;font-size:16px;line-height:20px;color:#9a9a9a;letter-spacing:-0.25px;">OBM Quantity Reports Converter (v1.0.4.20)</div>
<div style="left:1215px;top:295px;width:14px;height:1px;background:#8a8a8a;"></div>
<div style="left:1276px;top:288px;width:13px;height:13px;border:1px solid #8a8a8a;"></div>
<svg style="left:1336px;top:288px;" width="15" height="15" viewBox="0 0 15 15"><path d="M1 1 L14 14 M14 1 L1 14" stroke="#8a8a8a" stroke-width="1.3"/></svg>
<div style="left:415px;top:340px;width:942px;height:100px;border:1px solid #dcdcdc;"></div>
<div style="left:422px;top:330px;width:120px;height:20px;background:#f0f0f0;"></div>
<div class="t" style="left:426px;top:330.0px;font-size:16px;line-height:20px;color:#111;letter-spacing:-0.85px;-webkit-text-stroke:0.25px;">Default Properties</div>
<div class="t r" style="left:637px;top:367.0px;font-size:16px;line-height:20px;color:#111;letter-spacing:-0.6px;-webkit-text-stroke:0.25px;">Raw Reports Input Location:</div>
<div style="left:648px;top:364px;width:701px;height:26px;background:#f0f0f0;border:1px solid #d4d4d4;"></div>
<div class="t" style="left:651px;top:367.0px;font-size:16px;line-height:20px;color:#6a6a6a;letter-spacing:0.75px;-webkit-text-stroke:0.35px #6a6a6a;">C:\Worksets\FDOT\FDOT Test Dataset\calculations\structures</div>
<div class="t r" style="left:640px;top:406.0px;font-size:16px;line-height:20px;color:#111;letter-spacing:-0.58px;-webkit-text-stroke:0.25px;">Quantity Report Output Location:</div>
<div style="left:648px;top:403px;width:701px;height:26px;background:#f0f0f0;border:1px solid #d4d4d4;"></div>
<div class="t" style="left:651px;top:406.0px;font-size:16px;line-height:20px;color:#6a6a6a;letter-spacing:0.75px;-webkit-text-stroke:0.35px #6a6a6a;">C:\Worksets\FDOT\FDOT Test Dataset\calculations</div>
<div style="left:415px;top:460px;width:942px;height:100px;border:1px solid #dcdcdc;border-bottom:none;"></div>
<div style="left:422px;top:450px;width:120px;height:20px;background:#f0f0f0;"></div>
<div class="t" style="left:426px;top:450.0px;font-size:16px;line-height:20px;color:#111;letter-spacing:-0.85px;-webkit-text-stroke:0.25px;">RAW OBM Reports</div>
<div style="left:418px;top:472px;width:936px;height:82px;background:#ababab;border:2px solid #111;"></div>
<div style="left:420px;top:474px;width:932px;height:28px;background:#fff;"></div>
<div style="left:753px;top:476px;width:1px;height:24px;background:#e0e0e0;"></div>
<div style="left:900px;top:476px;width:1px;height:24px;background:#e0e0e0;"></div>
<div class="t" style="left:432px;top:479.0px;font-size:15px;line-height:18px;color:#111;letter-spacing:-0.85px;-webkit-text-stroke:0.25px;">Name</div>
<div class="t" style="left:763px;top:479.0px;font-size:15px;line-height:18px;color:#111;letter-spacing:-0.85px;-webkit-text-stroke:0.25px;">Date</div>
<div class="t" style="left:910px;top:479.0px;font-size:15px;line-height:18px;color:#111;letter-spacing:-0.85px;-webkit-text-stroke:0.25px;">Directory</div>
<div style="left:420px;top:502px;width:932px;height:28px;background:#0078d7;"></div>
<div style="left:753px;top:502px;width:1px;height:28px;background:#4a9fe4;"></div>
<div style="left:900px;top:502px;width:1px;height:28px;background:#4a9fe4;"></div>
<div class="t" style="left:425px;top:507.0px;font-size:15px;line-height:18px;color:#fff;letter-spacing:-0.55px;">Summary of Structures Quantities RAW.xlsx</div>
<div class="t" style="left:758px;top:507.0px;font-size:15px;line-height:18px;color:#fff;letter-spacing:0.1px;">6/3/2022 11:03 AM</div>
<div class="t" style="left:904px;top:507.0px;font-size:15px;line-height:18px;color:#fff;letter-spacing:-0.1px;">C:\Worksets\FDOT\FDOT Test Dataset\calculations\structures</div>
<div style="left:1260px;top:573px;width:97px;height:28px;background:#e1e1e1;border:1px solid #adadad;"></div>
<div class="t c" style="left:1308px;top:577.0px;font-size:16px;line-height:20px;color:#111;letter-spacing:-0.85px;-webkit-text-stroke:0.25px;">Run</div>
<div style="left:1380px;top:275px;width:365px;height:162px;background:#f0f0f0;border:1px solid #9a9a9a;box-shadow:0 4px 14px rgba(0,0,0,.35);"></div>
<div style="left:1381px;top:276px;width:363px;height:40px;background:#fff;"></div>
<svg style="left:1391px;top:283px;" width="24" height="24" viewBox="0 0 24 24"><path d="M3 20 Q2 12 9 9 Q12 3 17 4 Q13 7 14 10 Q10 14 9 20 Z" fill="none" stroke="#6a6a6a" stroke-width="2"/><rect x="12" y="12" width="10" height="10" rx="2" fill="#e8e8e8" stroke="#6a6a6a" stroke-width="1.5"/><path d="M14 15 h6 M14 18 h6 M17 13 v8" stroke="#6a6a6a" stroke-width="1"/></svg>
<div class="t" style="left:1420px;top:286.0px;font-size:16px;line-height:20px;color:#9a9a9a;letter-spacing:-0.25px;">Element Selection</div>
<div style="left:1584px;top:296px;width:14px;height:1px;background:#8a8a8a;"></div>
<div style="left:1645px;top:289px;width:13px;height:13px;border:1px solid #e0e0e0;"></div>
<svg style="left:1705px;top:288px;" width="15" height="15" viewBox="0 0 15 15"><path d="M1 1 L14 14 M14 1 L1 14" stroke="#8a8a8a" stroke-width="1.3"/></svg>
<div style="left:1396px;top:333px;width:145px;height:34px;border-top:1px solid #b0b0b0;border-left:1px solid #b0b0b0;border-right:1px solid #fff;border-bottom:1px solid #fff;"></div>
<div style="left:1400px;top:336px;width:27px;height:28px;background:#5a9ee6;border:1px solid #2a6fc0;"></div>
<svg style="left:1402px;top:338px;" width="23" height="24" viewBox="0 0 23 24"><circle cx="11.5" cy="12" r="6.5" fill="none" stroke="#e6f1fc" stroke-width="1.6"/><circle cx="11.5" cy="12" r="2.6" fill="none" stroke="#e6f1fc" stroke-width="1.4"/><path d="M11.5 2 v7 M11.5 15 v7 M2 12 h7 M14 12 h7" stroke="#e6f1fc" stroke-width="1.4"/></svg>
<svg style="left:1430px;top:343px;" width="24" height="14" viewBox="0 0 24 14"><rect x="1.5" y="1.5" width="20" height="11" fill="none" stroke="#2a96e0" stroke-width="1.7" stroke-dasharray="5 3"/></svg>
<svg style="left:1458px;top:343px;" width="24" height="14" viewBox="0 0 24 14"><path d="M6 1.5 L22 1.5 L17 12.5 L1.5 12.5 Z" fill="none" stroke="#2a96e0" stroke-width="1.7" stroke-dasharray="5 3"/></svg>
<svg style="left:1485px;top:338px;" width="24" height="24" viewBox="0 0 24 24"><circle cx="12" cy="12" r="9.5" fill="#fff" stroke="#2a96e0" stroke-width="1.7" stroke-dasharray="5 3"/></svg>
<svg style="left:1513px;top:339px;" width="24" height="22" viewBox="0 0 24 22"><path d="M2 20 L22 2" stroke="#2a96e0" stroke-width="1.8" stroke-dasharray="6 3"/></svg>
<svg style="left:1571px;top:335px;" width="24" height="24" viewBox="0 0 24 24"><defs><linearGradient id="gbs" x1="0" y1="0" x2="1" y2="1"><stop offset="0" stop-color="#5ab0ee"/><stop offset="1" stop-color="#1b5fa8"/></linearGradient></defs><rect x="1" y="1" width="21" height="21" fill="url(#gbs)" stroke="#0e3a6e" stroke-width="1.6"/></svg>
<svg style="left:1584px;top:349px;" width="18" height="18" viewBox="0 0 18 18"><circle cx="9" cy="9" r="6.5" fill="#fff" stroke="#e01a2a" stroke-width="2.6"/><path d="M4.5 4.5 L13.5 13.5" stroke="#e01a2a" stroke-width="2.6"/></svg>
<div style="left:1396px;top:388px;width:145px;height:34px;border-top:1px solid #b0b0b0;border-left:1px solid #b0b0b0;border-right:1px solid #fff;border-bottom:1px solid #fff;"></div>
<div style="left:1400px;top:391px;width:27px;height:28px;background:#5a9ee6;border:1px solid #2a6fc0;"></div>
<svg style="left:1404px;top:393px;" width="20" height="24" viewBox="0 0 20 24"><circle cx="9" cy="7" r="4.5" fill="none" stroke="#cfe4fa" stroke-width="1.4" stroke-dasharray="2 2"/><path d="M8 6 L8 19 L11 16 L13.5 21.5 L15.5 20.5 L13 15.5 L17 15.5 Z" fill="#111"/></svg>
<svg style="left:1431px;top:394px;" width="22" height="22" viewBox="0 0 22 22"><path d="M11 2 v18 M2 11 h18" stroke="#1b7fd6" stroke-width="5.4" stroke-linecap="round"/></svg>
<svg style="left:1459px;top:394px;" width="22" height="22" viewBox="0 0 22 22"><path d="M3 11 h16" stroke="#1b7fd6" stroke-width="5.4" stroke-linecap="round"/></svg>
<svg style="left:1486px;top:394px;" width="22" height="22" viewBox="0 0 22 22"><rect x="1.5" y="1.5" width="19" height="19" fill="#fff" stroke="#1b7fd6" stroke-width="2"/><path d="M20 2 L20 20 L2 20 Z" fill="#1b7fd6"/></svg>
<svg style="left:1513px;top:393px;" width="24" height="24" viewBox="0 0 24 24"><circle cx="12" cy="12" r="9.5" fill="#fff" stroke="#c8c8c8" stroke-width="1.7" stroke-dasharray="4 3"/></svg>
<svg style="left:1571px;top:390px;" width="24" height="24" viewBox="0 0 24 24"><defs><linearGradient id="gbs" x1="0" y1="0" x2="1" y2="1"><stop offset="0" stop-color="#5ab0ee"/><stop offset="1" stop-color="#1b5fa8"/></linearGradient></defs><rect x="1" y="1" width="21" height="21" fill="url(#gbs)" stroke="#0e3a6e" stroke-width="1.6"/></svg>
<svg style="left:1588px;top:397px;" width="16" height="24" viewBox="0 0 16 24"><path d="M1 1 L1 19 L5.5 15 L9 23 L12 21.5 L8.5 14 L14 14 Z" fill="#111"/></svg>
<svg style="left:1714px;top:410px;" width="12" height="7" viewBox="0 0 12 7"><path d="M0 0 L12 0 L6 7 Z" fill="#111"/></svg>
<div style="left:28px;top:626px;width:1506px;height:917px;background:#262626;box-shadow:0 3px 12px 2px rgba(0,0,0,.5);"></div>
<div style="left:28px;top:626px;width:1506px;height:917px;background:#262626;"></div>
<div style="left:28px;top:626px;width:1506px;height:46px;background:#0b0b0b;"></div>
<svg style="left:930px;top:626px;" width="604" height="46" viewBox="0 0 604 46"><circle cx="60" cy="12" r="26" fill="none" stroke="#1c1c1c" stroke-width="2"/><path d="M20 32 Q60 -18 100 36" fill="none" stroke="#1a1a1a" stroke-width="2"/><circle cx="138" cy="24" r="34" fill="none" stroke="#1c1c1c" stroke-width="2"/><path d="M98 44 Q138 -6 178 48" fill="none" stroke="#1a1a1a" stroke-width="2"/><circle cx="216" cy="36" r="26" fill="none" stroke="#1c1c1c" stroke-width="2"/><path d="M176 56 Q216 6 256 60" fill="none" stroke="#1a1a1a" stroke-width="2"/><circle cx="294" cy="12" r="34" fill="none" stroke="#1c1c1c" stroke-width="2"/><path d="M254 32 Q294 -18 334 36" fill="none" stroke="#1a1a1a" stroke-width="2"/><circle cx="372" cy="24" r="26" fill="none" stroke="#1c1c1c" stroke-width="2"/><path d="M332 44 Q372 -6 412 48" fill="none" stroke="#1a1a1a" stroke-width="2"/><circle cx="450" cy="36" r="34" fill="none" stroke="#1c1c1c" stroke-width="2"/><path d="M410 56 Q450 6 490 60" fill="none" stroke="#1a1a1a" stroke-width="2"/><circle cx="528" cy="12" r="26" fill="none" stroke="#1c1c1c" stroke-width="2"/><path d="M488 32 Q528 -18 568 36" fill="none" stroke="#1a1a1a" stroke-width="2"/><circle cx="606" cy="24" r="34" fill="none" stroke="#1c1c1c" stroke-width="2"/><path d="M566 44 Q606 -6 646 48" fill="none" stroke="#1a1a1a" stroke-width="2"/><circle cx="684" cy="36" r="26" fill="none" stroke="#1c1c1c" stroke-width="2"/><path d="M644 56 Q684 6 724 60" fill="none" stroke="#1a1a1a" stroke-width="2"/><circle cx="762" cy="12" r="34" fill="none" stroke="#1c1c1c" stroke-width="2"/><path d="M722 32 Q762 -18 802 36" fill="none" stroke="#1a1a1a" stroke-width="2"/><circle cx="840" cy="24" r="26" fill="none" stroke="#1c1c1c" stroke-width="2"/><path d="M800 44 Q840 -6 880 48" fill="none" stroke="#1a1a1a" stroke-width="2"/></svg>
<div class="t" style="left:56px;top:639.0px;font-size:16px;line-height:20px;color:#fff;-webkit-text-stroke:0.35px #fff;letter-spacing:-0.3px;">AutoSave</div>
<div style="left:132px;top:638px;width:51px;height:23px;border:2px solid #fff;border-radius:12px;"></div>
<div style="left:138px;top:644px;width:11px;height:11px;background:#fff;border-radius:6px;"></div>
<div class="t" style="left:157px;top:642.5px;font-size:12px;line-height:15px;color:#fff;font-weight:bold;">Off</div>
<svg style="left:199px;top:638px;" width="24" height="24" viewBox="0 0 24 24"><path d="M2 2 L18 2 L22 6 L22 22 L2 22 Z" fill="none" stroke="#fff" stroke-width="1.8"/><rect x="6" y="2" width="10" height="7" fill="none" stroke="#fff" stroke-width="1.6"/><rect x="6" y="14" width="12" height="8" fill="none" stroke="#fff" stroke-width="1.6"/></svg>
<svg style="left:238px;top:638px;" width="22" height="24" viewBox="0 0 22 24"><path d="M2 2 L2 11 L11 11" fill="none" stroke="#fff" stroke-width="2"/><path d="M2.5 10.5 Q10 0 18 6 Q23 12 10 22" fill="none" stroke="#fff" stroke-width="2"/></svg>
<svg style="left:267px;top:648px;" width="9" height="5" viewBox="0 0 9 5"><path d="M0 0 L4.5 4.5 L9 0" fill="none" stroke="#ddd" stroke-width="1.5"/></svg>
<svg style="left:290px;top:638px;" width="22" height="24" viewBox="0 0 22 24"><path d="M20 2 L20 11 L11 11" fill="none" stroke="#4a4a4a" stroke-width="2"/><path d="M19.5 10.5 Q12 0 4 6 Q-1 12 12 22" fill="none" stroke="#4a4a4a" stroke-width="2"/></svg>
<svg style="left:319px;top:648px;" width="9" height="5" viewBox="0 0 9 5"><path d="M0 0 L4.5 4.5 L9 0" fill="none" stroke="#4a4a4a" stroke-width="1.5"/></svg>
<svg style="left:347px;top:643px;" width="11" height="12" viewBox="0 0 11 12"><path d="M0 1 h11" stroke="#fff" stroke-width="1.8"/><path d="M1 5 L5.5 10 L10 5" fill="none" stroke="#fff" stroke-width="1.8"/></svg>
<div class="t" style="left:610px;top:639.0px;font-size:16px;line-height:20px;color:#fff;-webkit-text-stroke:0.35px #fff;letter-spacing:-0.25px;">Summary of Structure Quantities - 123456.xlsx</div>
<svg style="left:943px;top:648px;" width="9" height="5" viewBox="0 0 9 5"><path d="M0 0 L9 0 L4.5 5 Z" fill="#ddd"/></svg>
<svg style="left:1008px;top:638px;" width="20" height="22" viewBox="0 0 20 22"><circle cx="12" cy="8" r="6" fill="none" stroke="#fff" stroke-width="1.8"/><path d="M8 13 L1 21" stroke="#fff" stroke-width="2"/></svg>
<div class="t" style="left:1074px;top:640.0px;font-size:16px;line-height:20px;color:#fff;-webkit-text-stroke:0.35px #fff;letter-spacing:-0.1px;">Daffin, Kandi</div>
<svg style="left:1178px;top:632px;" width="34" height="36" viewBox="0 0 34 36"><defs><clipPath id="av"><circle cx="17" cy="17.5" r="16"/></clipPath></defs><g clip-path="url(#av)"><rect width="34" height="36" fill="#d9c48f"/><ellipse cx="18" cy="14" rx="9.5" ry="11" fill="#9a6638"/><ellipse cx="17.5" cy="18" rx="6" ry="7.5" fill="#dca878"/><path d="M10 13 Q17 5 25 12 L24 16 Q18 9 11 17 Z" fill="#a87040"/><path d="M0 36 L3 30 L12 25 L16 27 L22 22 L34 19 L34 36 Z" fill="#121218"/><ellipse cx="15.5" cy="27.5" rx="2.6" ry="3.4" fill="#e0caa0"/></g></svg>
<svg style="left:1247px;top:636px;" width="24" height="26" viewBox="0 0 24 26"><path d="M3 23 L6 15 L17 4 L21 8 L10 19 Z" fill="none" stroke="#fff" stroke-width="1.7"/><path d="M19 2 l2 -1 M22 5 l2 0 M21 1 l1 -1" stroke="#fff" stroke-width="1.3"/></svg>
<svg style="left:1308px;top:640px;" width="22" height="18" viewBox="0 0 22 18"><rect x="1" y="1" width="20" height="15" fill="none" stroke="#fff" stroke-width="1.6"/><path d="M1 5 h20" stroke="#fff" stroke-width="1.4"/><path d="M11 14 v-6 M8 10.5 l3 -3 l3 3" fill="none" stroke="#fff" stroke-width="1.4"/></svg>
<div style="left:1373px;top:648px;width:15px;height:1.5px;background:#e8e8e8;"></div>
<div style="left:1435px;top:642px;width:14px;height:14px;border:1.6px solid #fff;"></div>
<svg style="left:1496px;top:641px;" width="15" height="15" viewBox="0 0 15 15"><path d="M1 1 L14 14 M14 1 L1 14" stroke="#fff" stroke-width="1.6"/></svg>
<div style="left:28px;top:672px;width:1506px;height:42px;background:#2d2d2d;"></div>
<div class="t" style="left:50px;top:682.5px;font-size:17px;line-height:21px;color:#fff;-webkit-text-stroke:0.35px #fff;letter-spacing:-0.25px;">File</div>
<div class="t" style="left:120px;top:682.5px;font-size:17px;line-height:21px;color:#fff;-webkit-text-stroke:0.35px #fff;letter-spacing:-0.25px;">Home</div>
<div class="t" style="left:205px;top:682.5px;font-size:17px;line-height:21px;color:#fff;-webkit-text-stroke:0.35px #fff;letter-spacing:-0.25px;">Insert</div>
<div class="t" style="left:289px;top:682.5px;font-size:17px;line-height:21px;color:#fff;-webkit-text-stroke:0.35px #fff;letter-spacing:-0.25px;">Page Layout</div>
<div class="t" style="left:423px;top:682.5px;font-size:17px;line-height:21px;color:#fff;-webkit-text-stroke:0.35px #fff;letter-spacing:-0.25px;">Formulas</div>
<div class="t" style="left:533px;top:682.5px;font-size:17px;line-height:21px;color:#fff;-webkit-text-stroke:0.35px #fff;letter-spacing:-0.25px;">Data</div>
<div class="t" style="left:608px;top:682.5px;font-size:17px;line-height:21px;color:#fff;-webkit-text-stroke:0.35px #fff;letter-spacing:-0.25px;">Review</div>
<div class="t" style="left:698px;top:682.5px;font-size:17px;line-height:21px;color:#fff;-webkit-text-stroke:0.35px #fff;letter-spacing:-0.25px;">View</div>
<div class="t" style="left:771px;top:682.5px;font-size:17px;line-height:21px;color:#fff;-webkit-text-stroke:0.35px #fff;letter-spacing:-0.25px;">Help</div>
<div class="t" style="left:846px;top:682.5px;font-size:17px;line-height:21px;color:#fff;-webkit-text-stroke:0.35px #fff;letter-spacing:-0.25px;">BLUEBEAM</div>
<div class="t" style="left:970px;top:682.5px;font-size:17px;line-height:21px;color:#fff;-webkit-text-stroke:0.35px #fff;letter-spacing:-0.25px;">Inquire</div>
<div style="left:1283px;top:677px;width:134px;height:31px;background:#3d3d3d;border:1px solid #585858;border-radius:2px;"></div>
<svg style="left:1294px;top:684px;" width="17" height="16" viewBox="0 0 17 16"><path d="M1.5 1.5 h14 v9 h-9 l-3.5 3.5 v-3.5 h-1.5 Z" fill="none" stroke="#fff" stroke-width="1.5"/></svg>
<div class="t" style="left:1315px;top:682.5px;font-size:17px;line-height:21px;color:#fff;letter-spacing:-0.2px;font-weight:bold;">Comments</div>
<div style="left:1427px;top:677px;width:92px;height:31px;background:#3d3d3d;border:1px solid #585858;border-radius:2px;"></div>
<svg style="left:1436px;top:683px;" width="18" height="18" viewBox="0 0 18 18"><path d="M5 8 h-3.5 v8.5 h13 v-6" fill="none" stroke="#fff" stroke-width="1.5"/><path d="M6 12 Q7 5 14 5 M11 1.5 L14.5 5 L11 8.5" fill="none" stroke="#fff" stroke-width="1.5"/></svg>
<div class="t" style="left:1459px;top:682.5px;font-size:17px;line-height:21px;color:#fff;letter-spacing:-0.2px;font-weight:bold;">Share</div>
<div style="left:28px;top:714px;width:1506px;height:8px;background:#1f1f1f;"></div>
<div style="left:28px;top:722px;width:1506px;height:50px;background:#262626;"></div>
<div style="left:36px;top:727px;width:135px;height:35px;background:#353535;"></div>
<div class="t" style="left:44px;top:735.0px;font-size:16px;line-height:20px;color:#fff;-webkit-text-stroke:0.35px #fff;letter-spacing:-0.2px;">AQ29</div>
<svg style="left:151px;top:741px;" width="10" height="6" viewBox="0 0 10 6"><path d="M0 0 L10 0 L5 6 Z" fill="#e8e8e8"/></svg>
<div style="left:189px;top:738px;width:2.5px;height:2.5px;background:#e0e0e0;"></div>
<div style="left:189px;top:744px;width:2.5px;height:2.5px;background:#e0e0e0;"></div>
<div style="left:189px;top:750px;width:2.5px;height:2.5px;background:#e0e0e0;"></div>
<div style="left:210px;top:727px;width:149px;height:35px;background:#353535;"></div>
<svg style="left:229px;top:737px;" width="14" height="14" viewBox="0 0 14 14"><path d="M1 1 L13 13 M13 1 L1 13" stroke="#6a6a6a" stroke-width="2"/></svg>
<svg style="left:275px;top:737px;" width="18" height="14" viewBox="0 0 18 14"><path d="M1 8 L6 13 L17 1" fill="none" stroke="#6a6a6a" stroke-width="2.2"/></svg>
<div class="t" style="left:323px;top:733.5px;font-size:17px;line-height:21px;color:#fff;"><i style="font-family:'Liberation Serif',serif;font-size:19px;">f</i><span style="font-size:11px;font-style:italic;">x</span></div>
<div style="left:360px;top:727px;width:1168px;height:35px;background:#353535;"></div>
<svg style="left:1510px;top:740px;" width="12" height="8" viewBox="0 0 12 8"><path d="M1 1 L6 6 L11 1" fill="none" stroke="#fff" stroke-width="2"/></svg>
<div style="left:28px;top:772px;width:1506px;height:29px;background:#262626;"></div>
<svg style="left:40px;top:780px;" width="19" height="19" viewBox="0 0 19 19"><path d="M18 1 L18 18 L1 18 Z" fill="#5f5f5f"/></svg>
<div class="t c" style="left:127.0px;top:778.0px;font-size:17px;line-height:21px;color:#d6d6d6;-webkit-text-stroke:0.3px #d6d6d6;">A</div>
<div style="left:61.25px;top:777px;width:1.5px;height:23px;background:#4a4a4a;"></div>
<div class="t c" style="left:237.5px;top:778.0px;font-size:17px;line-height:21px;color:#d6d6d6;-webkit-text-stroke:0.3px #d6d6d6;">B</div>
<div style="left:191.25px;top:777px;width:1.5px;height:23px;background:#4a4a4a;"></div>
<div class="t c" style="left:417.0px;top:778.0px;font-size:17px;line-height:21px;color:#d6d6d6;-webkit-text-stroke:0.3px #d6d6d6;">D</div>
<div style="left:279.25px;top:777px;width:1.5px;height:23px;background:#4a4a4a;"></div>
<div style="left:285.25px;top:777px;width:1.5px;height:23px;background:#4a4a4a;"></div>
<div class="t c" style="left:589.5px;top:778.0px;font-size:17px;line-height:21px;color:#d6d6d6;-webkit-text-stroke:0.3px #d6d6d6;">H</div>
<div style="left:547.25px;top:777px;width:1.5px;height:23px;background:#4a4a4a;"></div>
<div style="left:553.25px;top:777px;width:1.5px;height:23px;background:#4a4a4a;"></div>
<div class="t c" style="left:659.5px;top:778.0px;font-size:17px;line-height:21px;color:#d6d6d6;-webkit-text-stroke:0.3px #d6d6d6;">W</div>
<div style="left:624.25px;top:777px;width:1.5px;height:23px;background:#4a4a4a;"></div>
<div style="left:630.25px;top:777px;width:1.5px;height:23px;background:#4a4a4a;"></div>
<div class="t c" style="left:722.5px;top:778.0px;font-size:17px;line-height:21px;color:#d6d6d6;-webkit-text-stroke:0.3px #d6d6d6;">X</div>
<div style="left:690.25px;top:777px;width:1.5px;height:23px;background:#4a4a4a;"></div>
<div class="t c" style="left:785.0px;top:778.0px;font-size:17px;line-height:21px;color:#d6d6d6;-webkit-text-stroke:0.3px #d6d6d6;">Y</div>
<div style="left:753.25px;top:777px;width:1.5px;height:23px;background:#4a4a4a;"></div>
<div class="t c" style="left:847.25px;top:778.0px;font-size:17px;line-height:21px;color:#d6d6d6;-webkit-text-stroke:0.3px #d6d6d6;">Z</div>
<div style="left:815.25px;top:777px;width:1.5px;height:23px;background:#4a4a4a;"></div>
<div class="t c" style="left:909.75px;top:778.0px;font-size:17px;line-height:21px;color:#d6d6d6;-webkit-text-stroke:0.3px #d6d6d6;">AA</div>
<div style="left:877.75px;top:777px;width:1.5px;height:23px;background:#4a4a4a;"></div>
<div class="t c" style="left:972.5px;top:778.0px;font-size:17px;line-height:21px;color:#d6d6d6;-webkit-text-stroke:0.3px #d6d6d6;">AB</div>
<div style="left:940.25px;top:777px;width:1.5px;height:23px;background:#4a4a4a;"></div>
<div class="t c" style="left:1035.0px;top:778.0px;font-size:17px;line-height:21px;color:#d6d6d6;-webkit-text-stroke:0.3px #d6d6d6;">AC</div>
<div style="left:1003.25px;top:777px;width:1.5px;height:23px;background:#4a4a4a;"></div>
<div class="t c" style="left:1147.5px;top:778.0px;font-size:17px;line-height:21px;color:#d6d6d6;-webkit-text-stroke:0.3px #d6d6d6;">AJ</div>
<div style="left:1062.25px;top:777px;width:1.5px;height:23px;background:#4a4a4a;"></div>
<div style="left:1068.25px;top:777px;width:1.5px;height:23px;background:#4a4a4a;"></div>
<div class="t c" style="left:1297.75px;top:778.0px;font-size:17px;line-height:21px;color:#d6d6d6;-webkit-text-stroke:0.3px #d6d6d6;">AN</div>
<div style="left:1225.25px;top:777px;width:1.5px;height:23px;background:#4a4a4a;"></div>
<div style="left:1231.25px;top:777px;width:1.5px;height:23px;background:#4a4a4a;"></div>
<div class="t c" style="left:1434.75px;top:778.0px;font-size:17px;line-height:21px;color:#d6d6d6;-webkit-text-stroke:0.3px #d6d6d6;">AO</div>
<div style="left:1365.75px;top:777px;width:1.5px;height:23px;background:#4a4a4a;"></div>
<div style="left:62px;top:800.5px;width:1441px;height:676.5px;background:#fff;"></div>
<div style="left:28px;top:800.5px;width:34px;height:676.5px;background:#262626;"></div>
<div style="left:1503px;top:776px;width:31px;height:701px;background:#262626;"></div>
<svg style="left:28px;top:800px;" width="1477" height="677" viewBox="0 0 1477 677"><path d="M34 21.0 H1475" stroke="#111" stroke-width="1.7"/><path d="M600 41.0 H1201" stroke="#111" stroke-width="1.7"/><path d="M34 101.0 H1475" stroke="#111" stroke-width="1.7"/><path d="M34 121.3 H1475" stroke="#111" stroke-width="1.7"/><path d="M34 141.5 H1475" stroke="#111" stroke-width="1.7"/><path d="M34 161.7 H1475" stroke="#111" stroke-width="1.7"/><path d="M34 181.9 H1475" stroke="#111" stroke-width="1.7"/><path d="M34 202.0 H1475" stroke="#111" stroke-width="1.7"/><path d="M34 222.0 H1475" stroke="#111" stroke-width="1.7"/><path d="M34 262.3 H1475" stroke="#111" stroke-width="1.7"/><path d="M34 282.8 H1475" stroke="#111" stroke-width="1.7"/><path d="M34 303.0 H1475" stroke="#111" stroke-width="1.7"/><path d="M34 323.0 H1475" stroke="#111" stroke-width="1.7"/><path d="M34 343.0 H1475" stroke="#111" stroke-width="1.7"/><path d="M34 363.3 H1475" stroke="#111" stroke-width="1.7"/><path d="M34 383.8 H1475" stroke="#111" stroke-width="1.7"/><path d="M34 404.0 H1475" stroke="#111" stroke-width="1.7"/><path d="M34 424.0 H1475" stroke="#111" stroke-width="1.7"/><path d="M34 443.8 H1475" stroke="#111" stroke-width="1.7"/><path d="M34 464.0 H1475" stroke="#111" stroke-width="1.7"/><path d="M34 484.0 H1475" stroke="#111" stroke-width="1.7"/><path d="M34 504.4 H1475" stroke="#111" stroke-width="1.7"/><path d="M34 524.5 H1475" stroke="#111" stroke-width="1.7"/><path d="M34 544.6 H1475" stroke="#111" stroke-width="1.7"/><path d="M34 564.7 H1475" stroke="#111" stroke-width="1.7"/><path d="M34 605.0 H1475" stroke="#111" stroke-width="1.7"/><path d="M34 645.0 H1475" stroke="#111" stroke-width="1.7"/><path d="M34 665.0 H1475" stroke="#111" stroke-width="1.7"/><path d="M34.5 21.0 V677.0" stroke="#111" stroke-width="1.7"/><path d="M164.0 21.0 V677.0" stroke="#111" stroke-width="1.7"/><path d="M255.0 21.0 V677.0" stroke="#111" stroke-width="1.7"/><path d="M523.0 21.0 V677.0" stroke="#111" stroke-width="1.7"/><path d="M600.0 21.0 V677.0" stroke="#111" stroke-width="1.7"/><path d="M663.0 41.0 V677.0" stroke="#111" stroke-width="1.7"/><path d="M726.0 21.0 V677.0" stroke="#111" stroke-width="1.7"/><path d="M788.0 41.0 V677.0" stroke="#111" stroke-width="1.7"/><path d="M850.5 21.0 V677.0" stroke="#111" stroke-width="1.7"/><path d="M913.0 41.0 V677.0" stroke="#111" stroke-width="1.7"/><path d="M976.0 41.0 V677.0" stroke="#111" stroke-width="1.7"/><path d="M1038.0 21.0 V677.0" stroke="#111" stroke-width="1.7"/><path d="M1201.0 21.0 V677.0" stroke="#111" stroke-width="1.7"/><path d="M1338.5 21.0 V677.0" stroke="#111" stroke-width="1.7"/><path d="M1475.0 21.0 V677.0" stroke="#111" stroke-width="1.7"/><path d="M2 0.5 H34" stroke="#3c3c3c" stroke-width="1"/><path d="M2 21.0 H34" stroke="#3c3c3c" stroke-width="1"/><path d="M2 41.0 H34" stroke="#3c3c3c" stroke-width="1"/><path d="M2 101.0 H34" stroke="#3c3c3c" stroke-width="1"/><path d="M2 121.3 H34" stroke="#3c3c3c" stroke-width="1"/><path d="M2 141.5 H34" stroke="#3c3c3c" stroke-width="1"/><path d="M2 161.7 H34" stroke="#3c3c3c" stroke-width="1"/><path d="M2 181.9 H34" stroke="#3c3c3c" stroke-width="1"/><path d="M2 202.0 H34" stroke="#3c3c3c" stroke-width="1"/><path d="M2 222.0 H34" stroke="#3c3c3c" stroke-width="1"/><path d="M2 262.3 H34" stroke="#3c3c3c" stroke-width="1"/><path d="M2 282.8 H34" stroke="#3c3c3c" stroke-width="1"/><path d="M2 303.0 H34" stroke="#3c3c3c" stroke-width="1"/><path d="M2 323.0 H34" stroke="#3c3c3c" stroke-width="1"/><path d="M2 343.0 H34" stroke="#3c3c3c" stroke-width="1"/><path d="M2 363.3 H34" stroke="#3c3c3c" stroke-width="1"/><path d="M2 383.8 H34" stroke="#3c3c3c" stroke-width="1"/><path d="M2 404.0 H34" stroke="#3c3c3c" stroke-width="1"/><path d="M2 424.0 H34" stroke="#3c3c3c" stroke-width="1"/><path d="M2 443.8 H34" stroke="#3c3c3c" stroke-width="1"/><path d="M2 464.0 H34" stroke="#3c3c3c" stroke-width="1"/><path d="M2 484.0 H34" stroke="#3c3c3c" stroke-width="1"/><path d="M2 504.4 H34" stroke="#3c3c3c" stroke-width="1"/><path d="M2 524.5 H34" stroke="#3c3c3c" stroke-width="1"/><path d="M2 544.6 H34" stroke="#3c3c3c" stroke-width="1"/><path d="M2 564.7 H34" stroke="#3c3c3c" stroke-width="1"/><path d="M2 605.0 H34" stroke="#3c3c3c" stroke-width="1"/><path d="M2 645.0 H34" stroke="#3c3c3c" stroke-width="1"/><path d="M2 665.0 H34" stroke="#3c3c3c" stroke-width="1"/><path d="M601.0 102.0 h8 l-8 8 Z" fill="#1e7a3c"/><path d="M601.0 122.3 h8 l-8 8 Z" fill="#1e7a3c"/><path d="M601.0 142.5 h8 l-8 8 Z" fill="#1e7a3c"/><path d="M601.0 162.7 h8 l-8 8 Z" fill="#1e7a3c"/><path d="M601.0 182.9 h8 l-8 8 Z" fill="#1e7a3c"/><path d="M601.0 203.0 h8 l-8 8 Z" fill="#1e7a3c"/><path d="M601.0 223.0 h8 l-8 8 Z" fill="#1e7a3c"/><path d="M601.0 263.3 h8 l-8 8 Z" fill="#1e7a3c"/><path d="M601.0 283.8 h8 l-8 8 Z" fill="#1e7a3c"/><path d="M601.0 304.0 h8 l-8 8 Z" fill="#1e7a3c"/><path d="M601.0 324.0 h8 l-8 8 Z" fill="#1e7a3c"/><path d="M601.0 344.0 h8 l-8 8 Z" fill="#1e7a3c"/><path d="M601.0 364.3 h8 l-8 8 Z" fill="#1e7a3c"/><path d="M601.0 384.8 h8 l-8 8 Z" fill="#1e7a3c"/><path d="M601.0 405.0 h8 l-8 8 Z" fill="#1e7a3c"/><path d="M601.0 425.0 h8 l-8 8 Z" fill="#1e7a3c"/><path d="M601.0 444.8 h8 l-8 8 Z" fill="#1e7a3c"/><path d="M601.0 465.0 h8 l-8 8 Z" fill="#1e7a3c"/><path d="M601.0 485.0 h8 l-8 8 Z" fill="#1e7a3c"/><path d="M601.0 505.4 h8 l-8 8 Z" fill="#1e7a3c"/><path d="M601.0 525.5 h8 l-8 8 Z" fill="#1e7a3c"/><path d="M601.0 545.6 h8 l-8 8 Z" fill="#1e7a3c"/><path d="M601.0 565.7 h8 l-8 8 Z" fill="#1e7a3c"/><path d="M601.0 606.0 h8 l-8 8 Z" fill="#1e7a3c"/><path d="M601.0 646.0 h8 l-8 8 Z" fill="#1e7a3c"/><path d="M727.0 102.0 h8 l-8 8 Z" fill="#1e7a3c"/><path d="M727.0 203.0 h8 l-8 8 Z" fill="#1e7a3c"/><path d="M727.0 425.0 h8 l-8 8 Z" fill="#1e7a3c"/><path d="M727.0 465.0 h8 l-8 8 Z" fill="#1e7a3c"/><path d="M727.0 565.7 h8 l-8 8 Z" fill="#1e7a3c"/><path d="M727.0 646.0 h8 l-8 8 Z" fill="#1e7a3c"/><path d="M914.0 646.0 h8 l-8 8 Z" fill="#1e7a3c"/></svg>
<div class="t c" style="left:45px;top:800.0px;font-size:17px;line-height:21px;color:#f2f2f2;letter-spacing:-0.3px;-webkit-text-stroke:0.15px #f2f2f2;">1</div>
<div class="t c" style="left:45px;top:820.0px;font-size:17px;line-height:21px;color:#f2f2f2;letter-spacing:-0.3px;-webkit-text-stroke:0.15px #f2f2f2;">2</div>
<div class="t c" style="left:45px;top:880.0px;font-size:17px;line-height:21px;color:#f2f2f2;letter-spacing:-0.3px;-webkit-text-stroke:0.15px #f2f2f2;">3</div>
<div class="t c" style="left:45px;top:900.3px;font-size:17px;line-height:21px;color:#f2f2f2;letter-spacing:-0.3px;-webkit-text-stroke:0.15px #f2f2f2;">4</div>
<div class="t c" style="left:45px;top:920.5px;font-size:17px;line-height:21px;color:#f2f2f2;letter-spacing:-0.3px;-webkit-text-stroke:0.15px #f2f2f2;">5</div>
<div class="t c" style="left:45px;top:940.7px;font-size:17px;line-height:21px;color:#f2f2f2;letter-spacing:-0.3px;-webkit-text-stroke:0.15px #f2f2f2;">6</div>
<div class="t c" style="left:45px;top:960.9px;font-size:17px;line-height:21px;color:#f2f2f2;letter-spacing:-0.3px;-webkit-text-stroke:0.15px #f2f2f2;">7</div>
<div class="t c" style="left:45px;top:981.0px;font-size:17px;line-height:21px;color:#f2f2f2;letter-spacing:-0.3px;-webkit-text-stroke:0.15px #f2f2f2;">8</div>
<div class="t c" style="left:45px;top:1001.0px;font-size:17px;line-height:21px;color:#f2f2f2;letter-spacing:-0.3px;-webkit-text-stroke:0.15px #f2f2f2;">9</div>
<div class="t c" style="left:45px;top:1041.3px;font-size:17px;line-height:21px;color:#f2f2f2;letter-spacing:-0.3px;-webkit-text-stroke:0.15px #f2f2f2;">10</div>
<div class="t c" style="left:45px;top:1061.8px;font-size:17px;line-height:21px;color:#f2f2f2;letter-spacing:-0.3px;-webkit-text-stroke:0.15px #f2f2f2;">11</div>
<div class="t c" style="left:45px;top:1082.0px;font-size:17px;line-height:21px;color:#f2f2f2;letter-spacing:-0.3px;-webkit-text-stroke:0.15px #f2f2f2;">12</div>
<div class="t c" style="left:45px;top:1102.0px;font-size:17px;line-height:21px;color:#f2f2f2;letter-spacing:-0.3px;-webkit-text-stroke:0.15px #f2f2f2;">13</div>
<div class="t c" style="left:45px;top:1122.0px;font-size:17px;line-height:21px;color:#f2f2f2;letter-spacing:-0.3px;-webkit-text-stroke:0.15px #f2f2f2;">14</div>
<div class="t c" style="left:45px;top:1142.3px;font-size:17px;line-height:21px;color:#f2f2f2;letter-spacing:-0.3px;-webkit-text-stroke:0.15px #f2f2f2;">15</div>
<div class="t c" style="left:45px;top:1162.8px;font-size:17px;line-height:21px;color:#f2f2f2;letter-spacing:-0.3px;-webkit-text-stroke:0.15px #f2f2f2;">16</div>
<div class="t c" style="left:45px;top:1183.0px;font-size:17px;line-height:21px;color:#f2f2f2;letter-spacing:-0.3px;-webkit-text-stroke:0.15px #f2f2f2;">17</div>
<div class="t c" style="left:45px;top:1203.0px;font-size:17px;line-height:21px;color:#f2f2f2;letter-spacing:-0.3px;-webkit-text-stroke:0.15px #f2f2f2;">18</div>
<div class="t c" style="left:45px;top:1222.8px;font-size:17px;line-height:21px;color:#f2f2f2;letter-spacing:-0.3px;-webkit-text-stroke:0.15px #f2f2f2;">19</div>
<div class="t c" style="left:45px;top:1243.0px;font-size:17px;line-height:21px;color:#f2f2f2;letter-spacing:-0.3px;-webkit-text-stroke:0.15px #f2f2f2;">20</div>
<div class="t c" style="left:45px;top:1263.0px;font-size:17px;line-height:21px;color:#f2f2f2;letter-spacing:-0.3px;-webkit-text-stroke:0.15px #f2f2f2;">21</div>
<div class="t c" style="left:45px;top:1283.4px;font-size:17px;line-height:21px;color:#f2f2f2;letter-spacing:-0.3px;-webkit-text-stroke:0.15px #f2f2f2;">22</div>
<div class="t c" style="left:45px;top:1303.5px;font-size:17px;line-height:21px;color:#f2f2f2;letter-spacing:-0.3px;-webkit-text-stroke:0.15px #f2f2f2;">23</div>
<div class="t c" style="left:45px;top:1323.6px;font-size:17px;line-height:21px;color:#f2f2f2;letter-spacing:-0.3px;-webkit-text-stroke:0.15px #f2f2f2;">24</div>
<div class="t c" style="left:45px;top:1343.7px;font-size:17px;line-height:21px;color:#f2f2f2;letter-spacing:-0.3px;-webkit-text-stroke:0.15px #f2f2f2;">25</div>
<div class="t c" style="left:45px;top:1384.0px;font-size:17px;line-height:21px;color:#f2f2f2;letter-spacing:-0.3px;-webkit-text-stroke:0.15px #f2f2f2;">26</div>
<div class="t c" style="left:45px;top:1424.0px;font-size:17px;line-height:21px;color:#f2f2f2;letter-spacing:-0.3px;-webkit-text-stroke:0.15px #f2f2f2;">27</div>
<div class="t c" style="left:45px;top:1444.0px;font-size:17px;line-height:21px;color:#f2f2f2;letter-spacing:-0.3px;-webkit-text-stroke:0.15px #f2f2f2;">28</div>
<div style="left:30px;top:1465.5px;width:32px;height:12px;background:#8c8c8c;overflow:hidden;border-right:2px solid #1e7a46;"><div class="t c" style="left:15px;top:-0.5px;font-size:17px;line-height:21px;color:#e4e4e4;letter-spacing:-0.5px;">29</div></div>
<div class="t mt" style="left:782.5px;top:801.8px;transform:translateX(-50%) scaleX(0.82);"><i>S</i><i>u</i><i><u>m</u></i><i><u>m</u></i><i>a</i><i>r</i><i>y</i><i> </i><i>o</i><i>f</i><i> </i><i>S</i><i>t</i><i>r</i><i>u</i><i>c</i><i>t</i><i>u</i><i>r</i><i>e</i><i> </i><i>Q</i><i>u</i><i>a</i><i>n</i><i>t</i><i>i</i><i>t</i><i>i</i><i>e</i><i>s</i><i> </i><i>-</i><i> </i><i>1</i><i>2</i><i>3</i><i>4</i><i>5</i><i>6</i></div>
<div class="t mh" style="left:127.0px;top:852.0px;transform:translateX(-50%) scaleX(0.82);"><i>S</i><i>e</i><i>c</i><i>t</i><i>i</i><i>o</i><i>n</i></div>
<div class="t mh" style="left:237.5px;top:842.0px;transform:translateX(-50%) scaleX(0.82);"><i>P</i><i>a</i><i>y</i><i> </i><i>I</i><i>t</i><i>e</i><i><u>m</u></i></div>
<div class="t mh" style="left:237.5px;top:862.0px;transform:translateX(-50%) scaleX(0.82);"><i>N</i><i>u</i><i><u>m</u></i><i>b</i><i>e</i><i>r</i></div>
<div class="t mh" style="left:417.0px;top:852.0px;transform:translateX(-50%) scaleX(0.82);"><i>P</i><i>a</i><i>y</i><i> </i><i>I</i><i>t</i><i>e</i><i><u>m</u></i><i> </i><i>D</i><i>e</i><i>s</i><i>c</i><i>r</i><i>i</i><i>p</i><i>t</i><i>i</i><i>o</i><i>n</i></div>
<div class="t mh" style="left:589.5px;top:842.0px;transform:translateX(-50%) scaleX(0.82);"><i>U</i><i>n</i><i>i</i><i>t</i><i> </i><i>o</i><i>f</i></div>
<div class="t mh" style="left:589.5px;top:862.0px;transform:translateX(-50%) scaleX(0.82);"><i><u>M</u></i><i>e</i><i>a</i><i>s</i><i>u</i><i>r</i><i>e</i></div>
<div class="t mh" style="left:691.0px;top:822.0px;transform:translateX(-50%) scaleX(0.82);"><i>Q</i><i>u</i><i>a</i><i>n</i><i>t</i><i>i</i><i>t</i><i>y</i></div>
<div class="t mh" style="left:816.2px;top:822.0px;transform:translateX(-50%) scaleX(0.82);"><i>T</i><i>o</i><i>t</i><i>a</i><i>l</i><i> </i><i>Q</i><i>u</i><i>a</i><i>n</i><i>t</i><i>i</i><i>t</i><i>y</i></div>
<div class="t mh" style="left:972.2px;top:822.0px;transform:translateX(-50%) scaleX(0.82);"><i>S</i><i>e</i><i>c</i><i>o</i><i>n</i><i>d</i><i>a</i><i>r</i><i>y</i><i> </i><i>Q</i><i>u</i><i>a</i><i>n</i><i>t</i><i>i</i><i>t</i><i>y</i></div>
<div class="t mh" style="left:1147.5px;top:822.0px;transform:translateX(-50%) scaleX(0.82);"><i>L</i><i>o</i><i>c</i><i>a</i><i>t</i><i>i</i><i>o</i><i>n</i></div>
<div class="t mh" style="left:1297.8px;top:852.0px;transform:translateX(-50%) scaleX(0.82);"><i>D</i><i>e</i><i>s</i><i>i</i><i>g</i><i>n</i><i> </i><i>N</i><i>o</i><i>t</i><i>e</i><i>s</i></div>
<div class="t mh" style="left:1434.8px;top:842.0px;transform:translateX(-50%) scaleX(0.82);"><i>C</i><i>o</i><i>n</i><i>s</i><i>t</i><i>r</i><i>u</i><i>c</i><i>t</i><i>i</i><i>o</i><i>n</i></div>
<div class="t mh" style="left:1434.8px;top:862.0px;transform:translateX(-50%) scaleX(0.82);"><i>R</i><i>e</i><i><u>m</u></i><i>a</i><i>r</i><i>k</i><i>s</i></div>
<div class="t mh" style="left:659.5px;top:863.0px;transform:translateX(-50%) scaleX(0.82);"><i>P</i></div>
<div class="t mh" style="left:722.5px;top:863.0px;transform:translateX(-50%) scaleX(0.82);"><i>F</i></div>
<div class="t mh" style="left:785.0px;top:863.0px;transform:translateX(-50%) scaleX(0.82);"><i>P</i></div>
<div class="t mh" style="left:847.2px;top:863.0px;transform:translateX(-50%) scaleX(0.82);"><i>F</i></div>
<div class="t mh" style="left:909.8px;top:863.0px;transform:translateX(-50%) scaleX(0.82);"><i>U</i><i>n</i><i>i</i><i>t</i></div>
<div class="t mh" style="left:972.5px;top:863.0px;transform:translateX(-50%) scaleX(0.82);"><i>P</i></div>
<div class="t mh" style="left:1035.0px;top:863.0px;transform:translateX(-50%) scaleX(0.82);"><i>F</i></div>
<div class="t mh" style="left:1147.5px;top:852.0px;transform:translateX(-50%) scaleX(0.82);"><i>L</i><i>o</i><i>c</i><i>a</i><i>t</i><i>i</i><i>o</i><i>n</i></div>
<div class="t mh" style="left:1147.5px;top:872.0px;transform:translateX(-50%) scaleX(0.82);"><i>D</i><i>e</i><i>s</i><i>c</i><i>r</i><i>i</i><i>p</i><i>t</i><i>i</i><i>o</i><i>n</i></div>
<div class="t mc" style="left:127.0px;top:902.1px;transform:translateX(-50%) scaleX(0.82);"><i>F</i><i>o</i><i>u</i><i>n</i><i>d</i><i>a</i><i>t</i><i>i</i><i>o</i><i>n</i></div>
<div class="t mc" style="left:194.5px;top:902.1px;width:106.7px;overflow:hidden;transform-origin:left;transform:scaleX(0.82);"><i>0</i><i>4</i><i>5</i><i>5</i><i> </i><i>3</i><i>4</i><i> </i><i> </i><i>5</i></div>
<div class="t mc" style="left:285.5px;top:902.1px;width:322.6px;overflow:hidden;transform-origin:left;transform:scaleX(0.82);"><i>P</i><i>r</i><i>e</i><i>s</i><i>t</i><i>r</i><i>e</i><i>s</i><i>s</i><i>e</i><i>d</i><i> </i><i>C</i><i>o</i><i>n</i><i>c</i><i>r</i><i>e</i><i>t</i><i>e</i><i> </i><i>P</i><i>i</i><i>l</i><i>i</i><i>n</i><i>g</i><i>,</i><i> </i><i>2</i><i>4</i><i>"</i></div>
<div class="t mc" style="left:589.5px;top:902.1px;transform:translateX(-50%) scaleX(0.82);"><i>L</i><i>F</i></div>
<div class="t mc" style="left:659.5px;top:902.1px;transform:translateX(-50%) scaleX(0.82);"><i>5</i><i>8</i><i>5</i><i>.</i><i>0</i></div>
<div class="t mc" style="left:785.0px;top:902.1px;transform:translateX(-50%) scaleX(0.82);"><i>4</i><i>1</i><i>7</i><i>0</i></div>
<div class="t mc" style="left:1147.5px;top:902.1px;transform:translateX(-50%) scaleX(0.82);"><i>E</i><i>n</i><i>d</i><i>B</i><i>e</i><i>n</i><i>t</i><i>1</i></div>
<div class="t mc" style="left:659.5px;top:922.4px;transform:translateX(-50%) scaleX(0.82);"><i>5</i><i>8</i><i>5</i><i>.</i><i>0</i></div>
<div class="t mc" style="left:1147.5px;top:922.4px;transform:translateX(-50%) scaleX(0.82);"><i>E</i><i>n</i><i>d</i><i>B</i><i>e</i><i>n</i><i>t</i><i>5</i></div>
<div class="t mc" style="left:659.5px;top:942.6px;transform:translateX(-50%) scaleX(0.82);"><i>1</i><i>0</i><i>0</i><i>0</i><i>.</i><i>0</i></div>
<div class="t mc" style="left:1147.5px;top:942.6px;transform:translateX(-50%) scaleX(0.82);"><i>P</i><i>i</i><i>e</i><i>r</i><i>2</i></div>
<div class="t mc" style="left:659.5px;top:962.8px;transform:translateX(-50%) scaleX(0.82);"><i>1</i><i>0</i><i>0</i><i>0</i><i>.</i><i>0</i></div>
<div class="t mc" style="left:1147.5px;top:962.8px;transform:translateX(-50%) scaleX(0.82);"><i>P</i><i>i</i><i>e</i><i>r</i><i>3</i></div>
<div class="t mc" style="left:659.5px;top:983.0px;transform:translateX(-50%) scaleX(0.82);"><i>1</i><i>0</i><i>0</i><i>0</i><i>.</i><i>0</i></div>
<div class="t mc" style="left:1147.5px;top:983.0px;transform:translateX(-50%) scaleX(0.82);"><i>P</i><i>i</i><i>e</i><i>r</i><i>4</i></div>
<div class="t mc" style="left:127.0px;top:1003.0px;transform:translateX(-50%) scaleX(0.82);"><i>R</i><i>a</i><i>i</i><i>l</i><i>i</i><i>n</i><i>g</i><i>/</i><i>B</i><i>a</i><i>r</i><i>r</i><i>i</i><i>e</i><i>r</i><i>s</i></div>
<div class="t mc" style="left:194.5px;top:1003.0px;width:106.7px;overflow:hidden;transform-origin:left;transform:scaleX(0.82);"><i>0</i><i>5</i><i>2</i><i>1</i><i> </i><i> </i><i>5</i><i> </i><i>1</i><i>4</i></div>
<div class="t mc" style="left:285.5px;top:1003.0px;width:322.6px;overflow:hidden;transform-origin:left;transform:scaleX(0.82);"><i>C</i><i>o</i><i>n</i><i>c</i><i>r</i><i>e</i><i>t</i><i>e</i><i> </i><i>T</i><i>r</i><i>a</i><i>f</i><i>f</i><i>i</i><i>c</i><i> </i><i>R</i><i>a</i><i>i</i><i>l</i><i>i</i><i>n</i><i>g</i><i> </i><i>-</i><i> </i><i>B</i><i>r</i><i>i</i><i>d</i><i>g</i><i>e</i></div>
<div class="t mc" style="left:589.5px;top:1003.0px;transform:translateX(-50%) scaleX(0.82);"><i>L</i><i>F</i></div>
<div class="t mc" style="left:659.5px;top:1003.0px;transform:translateX(-50%) scaleX(0.82);"><i>3</i><i>0</i><i>.</i><i>3</i></div>
<div class="t mc" style="left:785.0px;top:1003.0px;transform:translateX(-50%) scaleX(0.82);"><i>1</i><i>7</i><i>4</i><i>0</i></div>
<div class="t mc" style="left:1147.5px;top:1003.0px;transform:translateX(-50%) scaleX(0.82);"><i>B</i><i>e</i><i>g</i><i> </i><i>A</i><i>p</i><i>p</i><i> </i><i>S</i><i>l</i><i>a</i><i>b</i><i> </i><i>L</i><i>e</i><i>f</i><i>t</i></div>
<div class="t mc" style="left:659.5px;top:1033.2px;transform:translateX(-50%) scaleX(0.82);"><i>3</i><i>0</i><i>.</i><i>4</i></div>
<div class="t mc" style="left:1147.5px;top:1033.2px;transform:translateX(-50%) scaleX(0.82);"><i>B</i><i>e</i><i>g</i><i> </i><i>A</i><i>p</i><i>p</i><i> </i><i>S</i><i>l</i><i>a</i><i>b</i><i> </i><i>R</i><i>i</i><i>g</i><i>h</i><i>t</i></div>
<div class="t mc" style="left:659.5px;top:1063.5px;transform:translateX(-50%) scaleX(0.82);"><i>3</i><i>0</i><i>.</i><i>5</i></div>
<div class="t mc" style="left:1147.5px;top:1063.5px;transform:translateX(-50%) scaleX(0.82);"><i>E</i><i>n</i><i>d</i><i> </i><i>A</i><i>p</i><i>p</i><i> </i><i>S</i><i>l</i><i>a</i><i>b</i><i> </i><i>L</i><i>e</i><i>f</i><i>t</i></div>
<div class="t mc" style="left:659.5px;top:1083.9px;transform:translateX(-50%) scaleX(0.82);"><i>3</i><i>0</i><i>.</i><i>6</i></div>
<div class="t mc" style="left:1147.5px;top:1083.9px;transform:translateX(-50%) scaleX(0.82);"><i>E</i><i>n</i><i>d</i><i> </i><i>A</i><i>p</i><i>p</i><i> </i><i>S</i><i>l</i><i>a</i><i>b</i><i> </i><i>R</i><i>i</i><i>g</i><i>h</i><i>t</i></div>
<div class="t mc" style="left:659.5px;top:1104.0px;transform:translateX(-50%) scaleX(0.82);"><i>1</i><i>3</i><i>5</i><i>.</i><i>2</i></div>
<div class="t mc" style="left:1147.5px;top:1104.0px;transform:translateX(-50%) scaleX(0.82);"><i>S</i><i>p</i><i>a</i><i>n</i><i> </i><i>1</i><i> </i><i>L</i><i>e</i><i>f</i><i>t</i></div>
<div class="t mc" style="left:659.5px;top:1124.0px;transform:translateX(-50%) scaleX(0.82);"><i>1</i><i>3</i><i>5</i><i>.</i><i>3</i></div>
<div class="t mc" style="left:1147.5px;top:1124.0px;transform:translateX(-50%) scaleX(0.82);"><i>S</i><i>p</i><i>a</i><i>n</i><i> </i><i>1</i><i> </i><i>R</i><i>i</i><i>g</i><i>h</i><i>t</i></div>
<div class="t mc" style="left:659.5px;top:1144.2px;transform:translateX(-50%) scaleX(0.82);"><i>1</i><i>7</i><i>1</i><i>.</i><i>5</i></div>
<div class="t mc" style="left:1147.5px;top:1144.2px;transform:translateX(-50%) scaleX(0.82);"><i>S</i><i>p</i><i>a</i><i>n</i><i> </i><i>4</i><i> </i><i>L</i><i>e</i><i>f</i><i>t</i></div>
<div class="t mc" style="left:659.5px;top:1164.5px;transform:translateX(-50%) scaleX(0.82);"><i>1</i><i>7</i><i>1</i><i>.</i><i>6</i></div>
<div class="t mc" style="left:1147.5px;top:1164.5px;transform:translateX(-50%) scaleX(0.82);"><i>S</i><i>p</i><i>a</i><i>n</i><i> </i><i>4</i><i> </i><i>R</i><i>i</i><i>g</i><i>h</i><i>t</i></div>
<div class="t mc" style="left:659.5px;top:1184.9px;transform:translateX(-50%) scaleX(0.82);"><i>5</i><i>1</i><i>4</i><i>.</i><i>0</i></div>
<div class="t mc" style="left:1147.5px;top:1184.9px;transform:translateX(-50%) scaleX(0.82);"><i>S</i><i>p</i><i>a</i><i>n</i><i>s</i><i> </i><i>2</i><i>-</i><i>3</i><i> </i><i>L</i><i>e</i><i>f</i><i>t</i></div>
<div class="t mc" style="left:659.5px;top:1205.0px;transform:translateX(-50%) scaleX(0.82);"><i>4</i><i>9</i><i>0</i><i>.</i><i>1</i></div>
<div class="t mc" style="left:1147.5px;top:1205.0px;transform:translateX(-50%) scaleX(0.82);"><i>S</i><i>p</i><i>a</i><i>n</i><i>s</i><i> </i><i>2</i><i>-</i><i>3</i><i> </i><i>R</i><i>i</i><i>g</i><i>h</i><i>t</i></div>
<div class="t mc" style="left:127.0px;top:1224.9px;transform:translateX(-50%) scaleX(0.82);"><i>S</i><i>u</i><i>b</i><i>s</i><i>t</i><i>r</i><i>u</i><i>c</i><i>t</i><i>u</i><i>r</i><i>e</i></div>
<div class="t mc" style="left:194.5px;top:1224.9px;width:106.7px;overflow:hidden;transform-origin:left;transform:scaleX(0.82);"><i>0</i><i>4</i><i>0</i><i>0</i><i> </i><i> </i><i>3</i><i> </i><i>4</i><i>5</i></div>
<div class="t mc" style="left:285.5px;top:1224.9px;width:322.6px;overflow:hidden;transform-origin:left;transform:scaleX(0.82);"><i>C</i><i>o</i><i>n</i><i>c</i><i>r</i><i>e</i><i>t</i><i>e</i><i> </i><i>C</i><i>l</i><i>a</i><i>s</i><i>s</i><i> </i><i>I</i><i>I</i><i>I</i><i>,</i><i> </i><i>P</i><i>r</i><i>e</i><i>c</i><i>a</i><i>s</i><i>t</i><i> </i><i>B</i><i>r</i><i>i</i><i>d</i><i>g</i><i>e</i></div>
<div class="t mc" style="left:589.5px;top:1224.9px;transform:translateX(-50%) scaleX(0.82);"><i>C</i><i>Y</i></div>
<div class="t mc" style="left:659.5px;top:1224.9px;transform:translateX(-50%) scaleX(0.82);"><i>9</i><i>6</i><i>.</i><i>3</i><i>1</i></div>
<div class="t mc" style="left:785.0px;top:1224.9px;transform:translateX(-50%) scaleX(0.82);"><i>1</i><i>7</i><i>2</i><i>.</i><i>7</i></div>
<div class="t mc" style="left:1147.5px;top:1224.9px;transform:translateX(-50%) scaleX(0.82);"><i>E</i><i>n</i><i>d</i><i>B</i><i>e</i><i>n</i><i>t</i><i>1</i></div>
<div class="t mc" style="left:659.5px;top:1244.9px;transform:translateX(-50%) scaleX(0.82);"><i>7</i><i>6</i><i>.</i><i>3</i><i>6</i></div>
<div class="t mc" style="left:1147.5px;top:1244.9px;transform:translateX(-50%) scaleX(0.82);"><i>E</i><i>n</i><i>d</i><i>B</i><i>e</i><i>n</i><i>t</i><i>5</i></div>
<div class="t mc" style="left:194.5px;top:1265.0px;width:106.7px;overflow:hidden;transform-origin:left;transform:scaleX(0.82);"><i>0</i><i>4</i><i>0</i><i>0</i><i> </i><i> </i><i>4</i><i> </i><i> </i><i>5</i></div>
<div class="t mc" style="left:285.5px;top:1265.0px;width:322.6px;overflow:hidden;transform-origin:left;transform:scaleX(0.82);"><i>C</i><i>o</i><i>n</i><i>c</i><i>r</i><i>e</i><i>t</i><i>e</i><i> </i><i>C</i><i>l</i><i>a</i><i>s</i><i>s</i><i> </i><i>I</i><i>V</i><i>,</i><i> </i><i>B</i><i>r</i><i>i</i><i>d</i><i>g</i><i>e</i><i> </i><i>S</i><i>u</i><i>b</i><i>s</i><i>t</i><i>r</i><i>u</i></div>
<div class="t mc" style="left:589.5px;top:1265.0px;transform:translateX(-50%) scaleX(0.82);"><i>C</i><i>Y</i></div>
<div class="t mc" style="left:659.5px;top:1265.0px;transform:translateX(-50%) scaleX(0.82);"><i>3</i><i>.</i><i>0</i><i>7</i></div>
<div class="t mc" style="left:785.0px;top:1265.0px;transform:translateX(-50%) scaleX(0.82);"><i>2</i><i>8</i><i>1</i><i>0</i><i>.</i><i>5</i></div>
<div class="t mc" style="left:1147.5px;top:1265.0px;transform:translateX(-50%) scaleX(0.82);"><i>E</i><i>n</i><i>d</i><i>B</i><i>e</i><i>n</i><i>t</i><i>1</i></div>
<div class="t mc" style="left:659.5px;top:1285.2px;transform:translateX(-50%) scaleX(0.82);"><i>3</i><i>.</i><i>0</i><i>7</i></div>
<div class="t mc" style="left:1147.5px;top:1285.2px;transform:translateX(-50%) scaleX(0.82);"><i>E</i><i>n</i><i>d</i><i>B</i><i>e</i><i>n</i><i>t</i><i>5</i></div>
<div class="t mc" style="left:659.5px;top:1305.5px;transform:translateX(-50%) scaleX(0.82);"><i>9</i><i>6</i><i>9</i><i>.</i><i>1</i><i>2</i></div>
<div class="t mc" style="left:1147.5px;top:1305.5px;transform:translateX(-50%) scaleX(0.82);"><i>P</i><i>i</i><i>e</i><i>r</i><i>2</i></div>
<div class="t mc" style="left:659.5px;top:1325.5px;transform:translateX(-50%) scaleX(0.82);"><i>9</i><i>6</i><i>4</i><i>.</i><i>0</i><i>5</i></div>
<div class="t mc" style="left:1147.5px;top:1325.5px;transform:translateX(-50%) scaleX(0.82);"><i>P</i><i>i</i><i>e</i><i>r</i><i>3</i></div>
<div class="t mc" style="left:659.5px;top:1345.7px;transform:translateX(-50%) scaleX(0.82);"><i>8</i><i>7</i><i>1</i><i>.</i><i>2</i><i>3</i></div>
<div class="t mc" style="left:1147.5px;top:1345.7px;transform:translateX(-50%) scaleX(0.82);"><i>P</i><i>i</i><i>e</i><i>r</i><i>4</i></div>
<div class="t mc" style="left:127.0px;top:1375.8px;transform:translateX(-50%) scaleX(0.82);"><i>S</i><i>u</i><i>p</i><i>e</i><i>r</i><i>s</i><i>t</i><i>r</i><i>u</i><i>c</i><i>t</i><i>u</i><i>r</i><i>e</i></div>
<div class="t mc" style="left:194.5px;top:1375.8px;width:106.7px;overflow:hidden;transform-origin:left;transform:scaleX(0.82);"><i>0</i><i>4</i><i>5</i><i>0</i><i> </i><i> </i><i>2</i><i> </i><i>9</i><i>6</i></div>
<div class="t mc" style="left:285.5px;top:1375.8px;width:322.6px;overflow:hidden;transform-origin:left;transform:scaleX(0.82);"><i>P</i><i>r</i><i>e</i><i>s</i><i>t</i><i> </i><i>B</i><i>e</i><i>a</i><i><u>m</u></i><i>s</i><i>:</i><i> </i><i>F</i><i>l</i><i>o</i><i>r</i><i>i</i><i>d</i><i>a</i><i>-</i><i>I</i><i> </i><i>B</i><i>e</i><i>a</i><i><u>m</u></i><i> </i><i>9</i><i>6</i><i>"</i></div>
<div class="t mc" style="left:589.5px;top:1375.8px;transform:translateX(-50%) scaleX(0.82);"><i>L</i><i>F</i></div>
<div class="t mc" style="left:659.5px;top:1375.8px;transform:translateX(-50%) scaleX(0.82);"><i>6</i><i>7</i><i>3</i><i>.</i><i>2</i></div>
<div class="t mc" style="left:785.0px;top:1375.8px;transform:translateX(-50%) scaleX(0.82);"><i>1</i><i>5</i><i>2</i><i>7</i></div>
<div class="t mc" style="left:1147.5px;top:1375.8px;transform:translateX(-50%) scaleX(0.82);"><i>E</i><i>n</i><i>d</i><i> </i><i>B</i><i>e</i><i>n</i><i>t</i><i> </i><i>1</i><i> </i><i>-</i><i> </i><i>P</i><i>i</i><i>e</i><i>r</i><i> </i><i>2</i></div>
<div class="t mc" style="left:659.5px;top:1416.0px;transform:translateX(-50%) scaleX(0.82);"><i>8</i><i>5</i><i>3</i><i>.</i><i>4</i></div>
<div class="t mc" style="left:1147.5px;top:1416.0px;transform:translateX(-50%) scaleX(0.82);"><i>P</i><i>i</i><i>e</i><i>r</i><i> </i><i>4</i><i> </i><i>-</i><i> </i><i>E</i><i>n</i><i>d</i><i> </i><i>B</i><i>e</i><i>n</i><i>t</i><i> </i><i>5</i></div>
<div class="t mc" style="left:194.5px;top:1446.0px;width:106.7px;overflow:hidden;transform-origin:left;transform:scaleX(0.82);"><i>0</i><i>4</i><i>6</i><i>0</i><i> </i><i> </i><i>2</i><i> </i><i> </i><i>1</i></div>
<div class="t mc" style="left:285.5px;top:1446.0px;width:322.6px;overflow:hidden;transform-origin:left;transform:scaleX(0.82);"><i>S</i><i>t</i><i>r</i><i>u</i><i>c</i><i>t</i><i> </i><i>S</i><i>t</i><i>e</i><i>e</i><i>l</i><i>,</i><i> </i><i>C</i><i>a</i><i>r</i><i>b</i><i>o</i><i>n</i></div>
<div class="t mc" style="left:589.5px;top:1446.0px;transform:translateX(-50%) scaleX(0.82);"><i>L</i><i>S</i></div>
<div class="t mc" style="left:659.5px;top:1446.0px;transform:translateX(-50%) scaleX(0.82);"><i>1</i></div>
<div class="t mc" style="left:785.0px;top:1446.0px;transform:translateX(-50%) scaleX(0.82);"><i>1</i></div>
<div class="t mc" style="left:909.8px;top:1446.0px;transform:translateX(-50%) scaleX(0.82);"><i>L</i><i>B</i></div>
<div class="t mc" style="left:972.5px;top:1446.0px;transform:translateX(-50%) scaleX(0.82);"><i>3</i><i>7</i><i>2</i><i>4</i><i>0</i><i>.</i><i>0</i></div>
<div class="t mc" style="left:1147.5px;top:1446.0px;transform:translateX(-50%) scaleX(0.82);"><i>P</i><i>i</i><i>e</i><i>r</i><i> </i><i>2</i><i> </i><i>-</i><i> </i><i>P</i><i>i</i><i>e</i><i>r</i><i> </i><i>4</i></div>
<div style="left:1510px;top:778px;width:20px;height:699px;background:#3a3a3a;"></div>
<div style="left:1510px;top:778px;width:20px;height:20px;background:#262626;border:1px solid #5a5a5a;"></div>
<svg style="left:1514px;top:784px;" width="12" height="7" viewBox="0 0 12 7"><path d="M0 7 L12 7 L6 0 Z" fill="#e0e0e0"/></svg>
<div style="left:1510px;top:800px;width:20px;height:359px;background:#585858;"></div>
<div style="left:1510px;top:1457px;width:20px;height:20px;background:#262626;border:1px solid #5a5a5a;"></div>
<svg style="left:1514px;top:1464px;" width="12" height="7" viewBox="0 0 12 7"><path d="M0 0 L12 0 L6 7 Z" fill="#e0e0e0"/></svg>
<div style="left:28px;top:1477px;width:1506px;height:36px;background:#242424;"></div>
<svg style="left:64px;top:1488px;" width="8" height="12" viewBox="0 0 8 12"><path d="M7 1 L1 6 L7 11 Z" fill="#d0d0d0"/></svg>
<svg style="left:100px;top:1488px;" width="8" height="12" viewBox="0 0 8 12"><path d="M1 1 L7 6 L1 11 Z" fill="#d0d0d0"/></svg>
<div style="left:161px;top:1477px;width:86px;height:33px;background:#fff;border-bottom:3px solid #2a8a56;"></div>
<div class="t c" style="left:204px;top:1483.5px;font-size:17px;line-height:21px;color:#1e7a46;font-weight:bold;letter-spacing:-0.5px;">Sheet1</div>
<svg style="left:291px;top:1484px;" width="22" height="22" viewBox="0 0 22 22"><circle cx="11" cy="11" r="9.5" fill="none" stroke="#fff" stroke-width="1.7"/><path d="M11 6 v10 M6 11 h10" stroke="#fff" stroke-width="2"/></svg>
<div style="left:932px;top:1487px;width:2.5px;height:2.5px;background:#e0e0e0;"></div>
<div style="left:932px;top:1493px;width:2.5px;height:2.5px;background:#e0e0e0;"></div>
<div style="left:932px;top:1499px;width:2.5px;height:2.5px;background:#e0e0e0;"></div>
<div style="left:954px;top:1486px;width:551px;height:19px;background:#3a3a3a;"></div>
<div style="left:954px;top:1486px;width:20px;height:19px;background:#4a4a4a;border:1px solid #5a5a5a;"></div>
<svg style="left:960px;top:1490px;" width="7" height="11" viewBox="0 0 7 11"><path d="M7 0 L7 11 L0 5.5 Z" fill="#fff"/></svg>
<div style="left:976px;top:1486px;width:496px;height:19px;background:#585858;"></div>
<div style="left:1485px;top:1486px;width:20px;height:19px;background:#2a2a2a;border:1px solid #5a5a5a;"></div>
<svg style="left:1492px;top:1490px;" width="7" height="11" viewBox="0 0 7 11"><path d="M0 0 L0 11 L7 5.5 Z" fill="#fff"/></svg>
<div style="left:28px;top:1513px;width:1506px;height:30px;background:#2b2b2b;"></div>
<div class="t" style="left:37px;top:1521.0px;font-size:15px;line-height:18px;color:#fff;letter-spacing:-0.75px;font-weight:bold;">Ready</div>
<svg style="left:104px;top:1518px;" width="20" height="22" viewBox="0 0 20 22"><circle cx="9" cy="4" r="2.6" fill="none" stroke="#fff" stroke-width="1.4"/><path d="M2 8 L16 8 M9 8 L9 13 L4 20 M9 13 L12 17" fill="none" stroke="#fff" stroke-width="1.5"/><path d="M12 14 L19 21 M19 14 L12 21" stroke="#fff" stroke-width="1.4"/></svg>
<div class="t" style="left:130px;top:1521.0px;font-size:15px;line-height:18px;color:#fff;letter-spacing:-0.6px;font-weight:bold;">Accessibility: Investigate</div>
<div style="left:1120px;top:1514px;width:52px;height:29px;background:#555;"></div>
<svg style="left:1136px;top:1519px;" width="19" height="19" viewBox="0 0 19 19"><rect x="1" y="1" width="17" height="17" fill="none" stroke="#fff" stroke-width="1.6"/><path d="M6.7 1 v17 M12.3 1 v17 M1 6.7 h17 M1 12.3 h17" stroke="#fff" stroke-width="1.4"/></svg>
<svg style="left:1190px;top:1519px;" width="19" height="19" viewBox="0 0 19 19"><rect x="1" y="1" width="17" height="17" fill="none" stroke="#fff" stroke-width="1.6"/><rect x="5" y="5" width="9" height="9" fill="none" stroke="#fff" stroke-width="1.3"/><path d="M7 8 h5 M7 11 h5" stroke="#fff" stroke-width="1"/></svg>
<svg style="left:1243px;top:1519px;" width="19" height="19" viewBox="0 0 19 19"><path d="M1 1 h17 v17 h-17 Z M1 9 h17 M7 1 v8 M12 1 v8" fill="none" stroke="#fff" stroke-width="1.6"/></svg>
<div style="left:1286px;top:1528px;width:11px;height:1.5px;background:#fff;"></div>
<div style="left:1305px;top:1528px;width:133px;height:1.5px;background:#d0d0d0;"></div>
<div style="left:1369px;top:1519px;width:6px;height:19px;background:#f0f0f0;"></div>
<svg style="left:1444px;top:1522px;" width="13" height="13" viewBox="0 0 13 13"><path d="M6.5 0 v13 M0 6.5 h13" stroke="#fff" stroke-width="1.6"/></svg>
<div class="t" style="left:1473px;top:1520.0px;font-size:15px;line-height:18px;color:#fff;letter-spacing:-0.5px;font-weight:bold;">100%</div>
</div>
</body></html>
